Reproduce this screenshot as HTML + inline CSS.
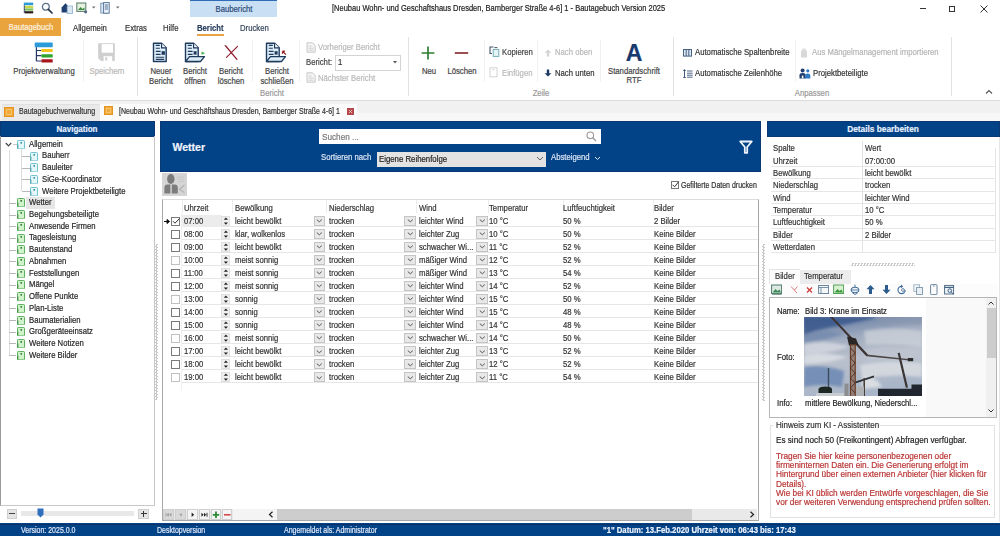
<!DOCTYPE html><html><head><meta charset="utf-8"><style>
html,body{margin:0;padding:0;}
body{width:1000px;height:536px;overflow:hidden;position:relative;background:#fff;font-family:"Liberation Sans",sans-serif;}
.t{position:absolute;white-space:nowrap;-webkit-text-stroke:0.2px currentColor;}
.r{position:absolute;}
</style></head><body>
<div class="r" style="left:190px;top:0px;width:87px;height:17px;background:#c9dff4;"></div>
<div class="r" style="left:190px;top:0px;width:87px;height:1px;background:#2f6cb5;"></div>
<div class="t" style="top:3.50px;font-size:9.00px;line-height:11px;color:#2c4a78;left:233.5px;transform-origin:50% 50%;transform:translateX(-50%) scaleX(0.858);">Baubericht</div>
<div class="t" style="top:2.50px;font-size:8.74px;line-height:11px;color:#222;left:331.8px;transform-origin:0 50%;transform:scaleX(0.858);">[Neubau Wohn- und Geschaftshaus Dresden, Bamberger Straße 4-6] 1 - Bautagebuch Version 2025</div>
<div class="r" style="left:920px;top:8px;width:6px;height:1.2px;background:#333;"></div>
<div class="r" style="left:949px;top:6px;width:6px;height:6px;background:none;box-sizing:border-box;border:1.2px solid #333;"></div>
<svg class="r" style="left:980px;top:5px" width="8" height="8" viewBox="0 0 8 8"><path d="M0.5 0.5L7.5 7.5M7.5 0.5L0.5 7.5" stroke="#333" stroke-width="1"/></svg>
<svg class="r" style="left:23px;top:2px" width="11" height="12" viewBox="0 0 11 12"><rect x="0.8" y="0.6" width="9.4" height="2.6" fill="#2b9ad8"/><rect x="1.6" y="3.8" width="8.6" height="2.2" fill="#c9d84a"/><rect x="1.6" y="6.4" width="8.6" height="2.2" fill="#7cc05a"/><rect x="1.6" y="9.2" width="8.6" height="2.2" fill="#2a1a1a"/><path d="M1.3 3.2V11" stroke="#283a66" stroke-width="0.9"/></svg>
<svg class="r" style="left:41px;top:2px" width="12" height="12" viewBox="0 0 12 12"><circle cx="4.8" cy="4.8" r="3.4" fill="none" stroke="#5a7188" stroke-width="1.3"/><path d="M7.3 7.3L11 11" stroke="#1f2f45" stroke-width="1.7" stroke-linecap="round"/></svg>
<svg class="r" style="left:61px;top:2px" width="12" height="12" viewBox="0 0 12 12"><path d="M0.6 5.4L4.5 1.2L8.4 5.4V10.6H0.6Z" fill="#1e3f6e"/><rect x="6.2" y="4" width="5.2" height="7.6" fill="#dbe9f5" stroke="#8fb0cc" stroke-width="0.8"/></svg>
<svg class="r" style="left:76px;top:2px" width="12" height="12" viewBox="0 0 12 12"><rect x="0.8" y="1" width="9" height="8.4" fill="#e7f1e0" stroke="#557a6a" stroke-width="1"/><path d="M2 8L4.5 5L6.5 7L8.5 5.5V8Z" fill="#3d8a3d"/><circle cx="9.6" cy="9.8" r="1.6" fill="#556a88"/></svg>
<svg class="r" style="left:92px;top:6px" width="4" height="3" viewBox="0 0 4 3"><path d="M0 0.5H3.5L1.75 2.5Z" fill="#666"/></svg>
<svg class="r" style="left:100px;top:2px" width="12" height="12" viewBox="0 0 12 12"><rect x="0.8" y="1.2" width="7" height="9.8" fill="#dceaf6" stroke="#6d8fb0" stroke-width="0.9"/><rect x="3.6" y="0.6" width="5.6" height="10.6" fill="#e8f2fa" stroke="#4f6f92" stroke-width="0.9"/><path d="M4.8 3H8M4.8 5H8M4.8 7H8" stroke="#2d4f78" stroke-width="0.8"/></svg>
<svg class="r" style="left:116px;top:6px" width="4" height="3" viewBox="0 0 4 3"><path d="M0 0.5H3.5L1.75 2.5Z" fill="#666"/></svg>
<div class="r" style="left:0px;top:18px;width:61px;height:18px;background:#e9a43e;"></div>
<div class="t" style="top:22.30px;font-size:8.78px;line-height:11px;color:#fdf3e0;left:30.5px;transform-origin:50% 50%;transform:translateX(-50%) scaleX(0.858);">Bautagebuch</div>
<div class="t" style="top:22.70px;font-size:9.00px;line-height:11px;color:#333;left:72.5px;transform-origin:0 50%;transform:scaleX(0.858);">Allgemein</div>
<div class="t" style="top:22.70px;font-size:9.00px;line-height:11px;color:#333;left:125px;transform-origin:0 50%;transform:scaleX(0.858);">Extras</div>
<div class="t" style="top:22.70px;font-size:9.00px;line-height:11px;color:#333;left:162.5px;transform-origin:0 50%;transform:scaleX(0.858);">Hilfe</div>
<div class="t" style="top:22.70px;font-size:9.00px;line-height:11px;color:#2a3f5f;font-weight:bold;left:197px;transform-origin:0 50%;transform:scaleX(0.858);">Bericht</div>
<div class="r" style="left:197px;top:34px;width:26.5px;height:2.2px;background:#e9a447;"></div>
<div class="t" style="top:22.70px;font-size:9.00px;line-height:11px;color:#34455c;left:240px;transform-origin:0 50%;transform:scaleX(0.858);">Drucken</div>
<div class="r" style="left:136.5px;top:37px;width:1px;height:59px;background:#e2e2e2;"></div>
<div class="r" style="left:408px;top:37px;width:1px;height:59px;background:#e2e2e2;"></div>
<div class="r" style="left:673px;top:37px;width:1px;height:59px;background:#e2e2e2;"></div>
<div class="r" style="left:951px;top:37px;width:1px;height:59px;background:#e2e2e2;"></div>
<div class="r" style="left:82.5px;top:40px;width:1px;height:42px;background:#f0f0f0;"></div>
<div class="r" style="left:251.5px;top:40px;width:1px;height:42px;background:#f0f0f0;"></div>
<div class="r" style="left:298.5px;top:40px;width:1px;height:42px;background:#f0f0f0;"></div>
<div class="r" style="left:483.5px;top:40px;width:1px;height:42px;background:#f0f0f0;"></div>
<div class="r" style="left:536.5px;top:40px;width:1px;height:42px;background:#f0f0f0;"></div>
<div class="r" style="left:600px;top:40px;width:1px;height:42px;background:#f0f0f0;"></div>
<div class="r" style="left:794.5px;top:40px;width:1px;height:42px;background:#f0f0f0;"></div>
<div class="t" style="top:88.00px;font-size:9.00px;line-height:11px;color:#999;left:272px;transform-origin:50% 50%;transform:translateX(-50%) scaleX(0.858);">Bericht</div>
<div class="t" style="top:88.00px;font-size:9.00px;line-height:11px;color:#999;left:540.5px;transform-origin:50% 50%;transform:translateX(-50%) scaleX(0.858);">Zeile</div>
<div class="t" style="top:88.00px;font-size:9.00px;line-height:11px;color:#999;left:812px;transform-origin:50% 50%;transform:translateX(-50%) scaleX(0.858);">Anpassen</div>
<svg class="r" style="left:985px;top:89px" width="8" height="6" viewBox="0 0 8 6"><path d="M1 4.5L4 1.5L7 4.5" fill="none" stroke="#555" stroke-width="1.1"/></svg>
<svg class="r" style="left:34px;top:42px" width="20" height="22" viewBox="0 0 20 22"><rect x="0.7" y="0.5" width="18" height="4.8" rx="0.6" fill="#2b9ad8"/><path d="M2.4 5.3V19.2M2.4 8.5H7.4M2.4 13.7H7.4M2.4 19H7.4" stroke="#283a66" stroke-width="1.2" fill="none"/><rect x="7.4" y="6.9" width="11.3" height="3.2" rx="0.5" fill="#f2c31a"/><rect x="7.4" y="12.2" width="11.3" height="3.2" rx="0.5" fill="#2fa52f"/><rect x="7.4" y="17.2" width="11.3" height="3.4" rx="0.5" fill="#a8141a"/></svg>
<div class="t" style="top:65.70px;font-size:9.00px;line-height:11px;color:#444;left:43.5px;transform-origin:50% 50%;transform:translateX(-50%) scaleX(0.858);">Projektverwaltung</div>
<svg class="r" style="left:97px;top:42px" width="20" height="20" viewBox="0 0 20 20"><path d="M1.2 1.2H17.8V19H4L1.2 16.2Z" fill="#cfcfcf"/><rect x="4.6" y="2.1" width="11.4" height="8.6" fill="#fff"/><rect x="6.6" y="14.2" width="8.6" height="4.8" fill="#fff"/><rect x="8.2" y="15.2" width="2" height="3.4" fill="#cfcfcf"/></svg>
<div class="t" style="top:65.70px;font-size:9.00px;line-height:11px;color:#b8b8b8;left:107px;transform-origin:50% 50%;transform:translateX(-50%) scaleX(0.858);">Speichern</div>
<svg class="r" style="left:152px;top:42px" width="16" height="21" viewBox="0 0 16 21"><path d="M1.5 1.2H9.6L14.2 5.8V19.5H1.5Z" fill="#ddeefa" stroke="#1f3b5c" stroke-width="1.4" stroke-linejoin="round"/><path d="M9.6 1.2V5.8H14.2" fill="#fff" stroke="#1f3b5c" stroke-width="1.2"/><path d="M3.8 3.4H7.8M3.8 6.2H7.8M3.8 9.4H8.6M3.8 12.4H8.6M3.8 15.2H12.2M3.8 17.4H12.2" stroke="#1f3b5c" stroke-width="1.1"/><rect x="9.6" y="9.2" width="3.3" height="3.6" fill="#1f3b5c"/></svg>
<div class="t" style="top:65.50px;font-size:9.00px;line-height:11px;color:#444;left:160.5px;transform-origin:50% 50%;transform:translateX(-50%) scaleX(0.858);">Neuer</div>
<div class="t" style="top:75.50px;font-size:9.00px;line-height:11px;color:#444;left:160.5px;transform-origin:50% 50%;transform:translateX(-50%) scaleX(0.858);">Bericht</div>
<svg class="r" style="left:184px;top:42px" width="23" height="21" viewBox="0 0 23 21"><path d="M1.5 1.2H9.6L14.2 5.8V19.5H1.5Z" fill="#ddeefa" stroke="#1f3b5c" stroke-width="1.4" stroke-linejoin="round"/><path d="M9.6 1.2V5.8H14.2" fill="#fff" stroke="#1f3b5c" stroke-width="1.2"/><path d="M3.8 3.4H7.8M3.8 6.2H7.8M3.8 9.4H8.6M3.8 12.4H8.6" stroke="#1f3b5c" stroke-width="1.1"/><rect x="9.6" y="9.2" width="3" height="3.4" fill="#1f3b5c"/><path d="M1.5 19.5L5.5 14.6H20.5L16.5 19.5Z" fill="#ddeefa" stroke="#1f3b5c" stroke-width="1.3" stroke-linejoin="round"/><path d="M17.6 9.6L21 11.2L17.6 12.8Z" fill="#3fae3f"/></svg>
<div class="t" style="top:65.50px;font-size:9.00px;line-height:11px;color:#444;left:195px;transform-origin:50% 50%;transform:translateX(-50%) scaleX(0.858);">Bericht</div>
<div class="t" style="top:75.50px;font-size:9.00px;line-height:11px;color:#444;left:195px;transform-origin:50% 50%;transform:translateX(-50%) scaleX(0.858);">öffnen</div>
<svg class="r" style="left:223px;top:44px" width="16" height="17" viewBox="0 0 16 17"><path d="M1.2 1.2L3 1.2L14.8 15.4L13.6 16Z M14.6 1.6L15 2.8L3.6 14L2.6 13.4Z" fill="#8e1c2c"/></svg>
<div class="t" style="top:65.50px;font-size:9.00px;line-height:11px;color:#444;left:231px;transform-origin:50% 50%;transform:translateX(-50%) scaleX(0.858);">Bericht</div>
<div class="t" style="top:75.50px;font-size:9.00px;line-height:11px;color:#444;left:231px;transform-origin:50% 50%;transform:translateX(-50%) scaleX(0.858);">löschen</div>
<svg class="r" style="left:265px;top:42px" width="23" height="21" viewBox="0 0 23 21"><path d="M1.5 1.2H9.6L14.2 5.8V19.5H1.5Z" fill="#ddeefa" stroke="#1f3b5c" stroke-width="1.4" stroke-linejoin="round"/><path d="M9.6 1.2V5.8H14.2" fill="#fff" stroke="#1f3b5c" stroke-width="1.2"/><path d="M3.8 3.4H7.8M3.8 6.2H7.8M3.8 9.4H8.6M3.8 12.4H8.6" stroke="#1f3b5c" stroke-width="1.1"/><rect x="9.6" y="9.2" width="3" height="3.4" fill="#1f3b5c"/><path d="M1.5 19.5L5.5 14.6H20.5L16.5 19.5Z" fill="#ddeefa" stroke="#1f3b5c" stroke-width="1.3" stroke-linejoin="round"/><path d="M17.5 9.2L21 12.6M17.5 9.2V11.8M17.5 9.2H20" stroke="#9a2222" stroke-width="1.2" fill="none"/></svg>
<div class="t" style="top:65.50px;font-size:9.00px;line-height:11px;color:#444;left:276.5px;transform-origin:50% 50%;transform:translateX(-50%) scaleX(0.858);">Bericht</div>
<div class="t" style="top:75.50px;font-size:9.00px;line-height:11px;color:#444;left:276.5px;transform-origin:50% 50%;transform:translateX(-50%) scaleX(0.858);">schließen</div>
<svg class="r" style="left:306px;top:41.8px" width="11" height="11" viewBox="0 0 11 11"><path d="M1 0.8H6.5L9.2 3.5V10.2H1Z" fill="#f4f4f4" stroke="#c4c4c4" stroke-width="0.9"/><path d="M2.6 4.2H5.6M2.6 6.2H7.6M2.6 8.2H7.6" stroke="#cacaca" stroke-width="0.8"/></svg>
<div class="t" style="top:41.80px;font-size:9.00px;line-height:11px;color:#b8b8b8;left:318px;transform-origin:0 50%;transform:scaleX(0.858);">Vorheriger Bericht</div>
<div class="t" style="top:56.50px;font-size:9.00px;line-height:11px;color:#444;left:306px;transform-origin:0 50%;transform:scaleX(0.858);">Bericht:</div>
<div class="r" style="left:335px;top:54.5px;width:66px;height:16px;background:#fff;box-sizing:border-box;border:1px solid #d4d4d4;"></div>
<div class="t" style="top:56.50px;font-size:9.00px;line-height:11px;color:#333;left:338px;transform-origin:0 50%;transform:scaleX(0.858);">1</div>
<svg class="r" style="left:393px;top:61px" width="5" height="3" viewBox="0 0 5 3"><path d="M0 0H4L2 2.5Z" fill="#555"/></svg>
<svg class="r" style="left:306px;top:72px" width="11" height="11" viewBox="0 0 11 11"><path d="M1 0.8H6.5L9.2 3.5V10.2H1Z" fill="#f4f4f4" stroke="#c4c4c4" stroke-width="0.9"/><path d="M2.6 4.2H5.6M2.6 6.2H7.6M2.6 8.2H7.6" stroke="#cacaca" stroke-width="0.8"/></svg>
<div class="t" style="top:72.50px;font-size:9.00px;line-height:11px;color:#b8b8b8;left:318px;transform-origin:0 50%;transform:scaleX(0.858);">Nächster Bericht</div>
<svg class="r" style="left:421px;top:46px" width="14" height="14" viewBox="0 0 14 14"><path d="M7 0.6V13.4M0.6 7H13.4" stroke="#2f7d34" stroke-width="1.7"/></svg>
<div class="t" style="top:66.10px;font-size:9.00px;line-height:11px;color:#444;left:428.5px;transform-origin:50% 50%;transform:translateX(-50%) scaleX(0.858);">Neu</div>
<svg class="r" style="left:454px;top:51px" width="15" height="4" viewBox="0 0 15 4"><path d="M0.8 2H14.2" stroke="#8f3b3d" stroke-width="1.8"/></svg>
<div class="t" style="top:66.10px;font-size:9.00px;line-height:11px;color:#444;left:461.5px;transform-origin:50% 50%;transform:translateX(-50%) scaleX(0.858);">Löschen</div>
<svg class="r" style="left:489px;top:46px" width="11" height="11" viewBox="0 0 11 11"><path d="M4.5 1H1V7.5H3" fill="none" stroke="#44556a" stroke-width="1.1"/><rect x="4.2" y="3.4" width="5.6" height="7" fill="#e6f3f4" stroke="#6aa9b0" stroke-width="0.9"/><path d="M5.4 1.6H8.4" stroke="#44556a" stroke-width="1"/></svg>
<div class="t" style="top:46.50px;font-size:9.00px;line-height:11px;color:#444;left:501.5px;transform-origin:0 50%;transform:scaleX(0.858);">Kopieren</div>
<svg class="r" style="left:489px;top:67px" width="10" height="11" viewBox="0 0 10 11"><rect x="1" y="0.8" width="7" height="9" fill="none" stroke="#cfcfcf" stroke-width="0.9"/><path d="M3.5 2.6H5.5" stroke="#cfcfcf"/></svg>
<div class="t" style="top:67.50px;font-size:9.00px;line-height:11px;color:#b8b8b8;left:501.5px;transform-origin:0 50%;transform:scaleX(0.858);">Einfügen</div>
<svg class="r" style="left:544px;top:48.5px" width="8" height="8" viewBox="0 0 8 8"><path d="M4 0.5L7.4 3.8H5.2V7.6H2.8V3.8H0.6Z" fill="#d4d4d4"/></svg>
<div class="t" style="top:46.50px;font-size:9.00px;line-height:11px;color:#b8b8b8;left:555px;transform-origin:0 50%;transform:scaleX(0.858);">Nach oben</div>
<svg class="r" style="left:544px;top:69px" width="8" height="8" viewBox="0 0 8 8"><path d="M4 7.6L7.4 4.2H5.2V0.4H2.8V4.2H0.6Z" fill="#1f3b63"/></svg>
<div class="t" style="top:67.50px;font-size:9.00px;line-height:11px;color:#333;left:555px;transform-origin:0 50%;transform:scaleX(0.858);">Nach unten</div>
<div class="t" style="top:41.00px;font-size:23.00px;line-height:24px;color:#173a6e;font-weight:bold;left:634px;transform-origin:50% 50%;transform:translateX(-50%);">A</div>
<div class="t" style="top:66.10px;font-size:9.00px;line-height:11px;color:#444;left:634px;transform-origin:50% 50%;transform:translateX(-50%) scaleX(0.858);">Standardschrift</div>
<div class="t" style="top:75.10px;font-size:9.00px;line-height:11px;color:#444;left:634px;transform-origin:50% 50%;transform:translateX(-50%) scaleX(0.858);">RTF</div>
<svg class="r" style="left:683px;top:48.5px" width="9" height="8" viewBox="0 0 9 8"><rect x="0.5" y="0.5" width="8" height="6.6" fill="#dbe8f5" stroke="#4a6282" stroke-width="1"/><path d="M3.2 0.5V7.1M5.8 0.5V7.1" stroke="#4a6282" stroke-width="1"/></svg>
<div class="t" style="top:47.10px;font-size:9.00px;line-height:11px;color:#333;left:694.5px;transform-origin:0 50%;transform:scaleX(0.858);">Automatische Spaltenbreite</div>
<svg class="r" style="left:683px;top:68.5px" width="10" height="9" viewBox="0 0 10 9"><path d="M1.5 0.8V9.2M0.3 2L1.5 0.6L2.7 2M0.3 8L1.5 9.4L2.7 8" stroke="#2c4a70" stroke-width="0.9" fill="none"/><path d="M4 2H9.6M4 4.2H9.6M4 6.2H9.6M4 8.2H9.6" stroke="#3b5578" stroke-width="0.9"/></svg>
<div class="t" style="top:67.50px;font-size:9.00px;line-height:11px;color:#333;left:694.5px;transform-origin:0 50%;transform:scaleX(0.858);">Automatische Zeilenhöhe</div>
<svg class="r" style="left:800px;top:47.5px" width="9" height="10" viewBox="0 0 9 10"><rect x="1" y="2.5" width="6" height="7" fill="#d8d8d8"/><rect x="2.3" y="0.6" width="3.4" height="2" fill="#d8d8d8"/></svg>
<div class="t" style="top:47.10px;font-size:9.00px;line-height:11px;color:#b5b5b5;left:812px;transform-origin:0 50%;transform:scaleX(0.858);">Aus Mängelmanagement importieren</div>
<svg class="r" style="left:799px;top:67.5px" width="12" height="11" viewBox="0 0 12 11"><circle cx="3.6" cy="2.4" r="2" fill="#1e3f6e"/><path d="M0.5 10.5V7.2Q0.5 5 3.6 5Q6.7 5 6.7 7.2V10.5Z" fill="#1e3f6e"/><circle cx="8.8" cy="2.8" r="1.6" fill="#2c7bc4"/><path d="M6.3 10.5V7.5Q6.3 5.6 8.8 5.6Q11.3 5.6 11.3 7.5V10.5Z" fill="#2c7bc4"/><path d="M2.8 10.5V7.6H4.4V10.5" fill="#fff"/></svg>
<div class="t" style="top:67.50px;font-size:9.00px;line-height:11px;color:#333;left:812.5px;transform-origin:0 50%;transform:scaleX(0.858);">Projektbeteiligte</div>
<div class="r" style="left:0px;top:100px;width:1000px;height:1px;background:#dcdcdc;"></div>
<div class="r" style="left:0px;top:101px;width:1000px;height:20px;background:#f1f1f1;"></div>
<div class="r" style="left:2px;top:104px;width:98px;height:17px;background:#e9e9e9;border-top:1px solid #e0e0e0;box-sizing:border-box;"></div>
<div class="r" style="left:357px;top:112.5px;width:643px;height:8.5px;background:#f8f7f8;"></div>
<div class="r" style="left:100px;top:103.5px;width:257px;height:17.5px;background:#fbfbfb;"></div>
<svg class="r" style="left:4px;top:107px" width="10" height="10" viewBox="0 0 10 10"><rect x="0.5" y="0.5" width="9" height="9" fill="#f2a93b" stroke="#e59520" stroke-width="1"/><rect x="2.6" y="2.6" width="4.8" height="4.8" fill="none" stroke="#f7c87a" stroke-width="0.8"/></svg>
<div class="t" style="top:107.40px;font-size:8.27px;line-height:10px;color:#333;left:18.5px;transform-origin:0 50%;transform:scaleX(0.858);">Bautagebuchverwaltung</div>
<svg class="r" style="left:104px;top:106px" width="9" height="9" viewBox="0 0 9 9"><rect x="0.5" y="0.5" width="8" height="8" fill="#f2a93b" stroke="#e59520" stroke-width="1"/><rect x="2.4" y="2.4" width="4.2" height="4.2" fill="none" stroke="#f7c87a" stroke-width="0.8"/></svg>
<div class="t" style="top:106.50px;font-size:8.16px;line-height:10px;color:#333;left:118.5px;transform-origin:0 50%;transform:scaleX(0.858);">[Neubau Wohn- und Geschäftshaus Dresden, Bamberger Straße 4-6] 1</div>
<div class="r" style="left:347px;top:107.5px;width:7px;height:7px;background:#b5494b;"></div>
<svg class="r" style="left:347px;top:107.5px" width="7" height="7" viewBox="0 0 7 7"><path d="M2 2L5 5M5 2L2 5" stroke="#f4d0d0" stroke-width="0.8"/></svg>
<div class="r" style="left:0px;top:121px;width:154.5px;height:15.8px;background:#024286;box-sizing:border-box;border:1px solid #0b3872;"></div>
<div class="t" style="top:122.80px;font-size:9.34px;line-height:12px;color:#e8f0ff;font-weight:bold;left:77px;transform-origin:50% 50%;transform:translateX(-50%) scaleX(0.858);">Navigation</div>
<div class="r" style="left:0px;top:136px;width:155px;height:370px;background:none;box-sizing:border-box;border:1px solid #c8c8c8;border-top:none;border-left:1px solid #9a9a9a;"></div>
<div class="r" style="left:9px;top:150px;width:1px;height:205px;background:#dcdcdc;"></div>
<div class="r" style="left:21px;top:148.5px;width:1px;height:42px;background:#dcdcdc;"></div>
<svg class="r" style="left:17px;top:139.79999999999998px" width="8" height="9" viewBox="0 0 8 9"><rect x="0.5" y="0.5" width="7" height="8.4" rx="0.8" fill="#e4f8fb" stroke="#62bccb" stroke-width="0.9"/><path d="M0.9 4.5V8.6" stroke="#3a8a98" stroke-width="0.8"/><circle cx="4.2" cy="2.8" r="0.9" fill="#2b7d90"/></svg>
<div class="t" style="top:138.70px;font-size:9.00px;line-height:11px;color:#262626;left:29px;transform-origin:0 50%;transform:scaleX(0.858);">Allgemein</div>
<div class="r" style="left:21.5px;top:155.92px;width:8px;height:1px;background:#b8b8b8;"></div>
<svg class="r" style="left:29.5px;top:151.51999999999998px" width="8" height="9" viewBox="0 0 8 9"><rect x="0.5" y="0.5" width="7" height="8.4" rx="0.8" fill="#e4f8fb" stroke="#62bccb" stroke-width="0.9"/><path d="M0.9 4.5V8.6" stroke="#3a8a98" stroke-width="0.8"/><circle cx="4.2" cy="2.8" r="0.9" fill="#2b7d90"/></svg>
<div class="t" style="top:150.42px;font-size:9.00px;line-height:11px;color:#262626;left:41.5px;transform-origin:0 50%;transform:scaleX(0.858);">Bauherr</div>
<div class="r" style="left:21.5px;top:167.64px;width:8px;height:1px;background:#b8b8b8;"></div>
<svg class="r" style="left:29.5px;top:163.23999999999998px" width="8" height="9" viewBox="0 0 8 9"><rect x="0.5" y="0.5" width="7" height="8.4" rx="0.8" fill="#e4f8fb" stroke="#62bccb" stroke-width="0.9"/><path d="M0.9 4.5V8.6" stroke="#3a8a98" stroke-width="0.8"/><circle cx="4.2" cy="2.8" r="0.9" fill="#2b7d90"/></svg>
<div class="t" style="top:162.14px;font-size:9.00px;line-height:11px;color:#262626;left:41.5px;transform-origin:0 50%;transform:scaleX(0.858);">Bauleiter</div>
<div class="r" style="left:21.5px;top:179.35999999999999px;width:8px;height:1px;background:#b8b8b8;"></div>
<svg class="r" style="left:29.5px;top:174.95999999999998px" width="8" height="9" viewBox="0 0 8 9"><rect x="0.5" y="0.5" width="7" height="8.4" rx="0.8" fill="#e4f8fb" stroke="#62bccb" stroke-width="0.9"/><path d="M0.9 4.5V8.6" stroke="#3a8a98" stroke-width="0.8"/><circle cx="4.2" cy="2.8" r="0.9" fill="#2b7d90"/></svg>
<div class="t" style="top:173.86px;font-size:9.00px;line-height:11px;color:#262626;left:41.5px;transform-origin:0 50%;transform:scaleX(0.858);">SiGe-Koordinator</div>
<div class="r" style="left:21.5px;top:191.07999999999998px;width:8px;height:1px;background:#b8b8b8;"></div>
<svg class="r" style="left:29.5px;top:186.67999999999998px" width="8" height="9" viewBox="0 0 8 9"><rect x="0.5" y="0.5" width="7" height="8.4" rx="0.8" fill="#e4f8fb" stroke="#62bccb" stroke-width="0.9"/><path d="M0.9 4.5V8.6" stroke="#3a8a98" stroke-width="0.8"/><circle cx="4.2" cy="2.8" r="0.9" fill="#2b7d90"/></svg>
<div class="t" style="top:185.58px;font-size:9.00px;line-height:11px;color:#262626;left:41.5px;transform-origin:0 50%;transform:scaleX(0.858);">Weitere Projektbeteiligte</div>
<div class="r" style="left:26px;top:196.79999999999998px;width:29px;height:12px;background:#e6e6e6;"></div>
<div class="r" style="left:9px;top:202.79999999999998px;width:7px;height:1px;background:#b8b8b8;"></div>
<svg class="r" style="left:17px;top:198.39999999999998px" width="8" height="9" viewBox="0 0 8 9"><rect x="0.5" y="0.5" width="7" height="8.4" rx="0.8" fill="#d2f2cc" stroke="#4fa852" stroke-width="0.9"/><path d="M0.9 4.5V8.6" stroke="#2a7a30" stroke-width="0.8"/><circle cx="4.2" cy="2.8" r="0.9" fill="#1e6b28"/></svg>
<div class="t" style="top:197.30px;font-size:9.00px;line-height:11px;color:#262626;left:29px;transform-origin:0 50%;transform:scaleX(0.858);">Wetter</div>
<div class="r" style="left:9px;top:214.51999999999998px;width:7px;height:1px;background:#b8b8b8;"></div>
<svg class="r" style="left:17px;top:210.11999999999998px" width="8" height="9" viewBox="0 0 8 9"><rect x="0.5" y="0.5" width="7" height="8.4" rx="0.8" fill="#d2f2cc" stroke="#4fa852" stroke-width="0.9"/><path d="M0.9 4.5V8.6" stroke="#2a7a30" stroke-width="0.8"/><circle cx="4.2" cy="2.8" r="0.9" fill="#1e6b28"/></svg>
<div class="t" style="top:209.02px;font-size:9.00px;line-height:11px;color:#262626;left:29px;transform-origin:0 50%;transform:scaleX(0.858);">Begehungsbeteiligte</div>
<div class="r" style="left:9px;top:226.24px;width:7px;height:1px;background:#b8b8b8;"></div>
<svg class="r" style="left:17px;top:221.84px" width="8" height="9" viewBox="0 0 8 9"><rect x="0.5" y="0.5" width="7" height="8.4" rx="0.8" fill="#d2f2cc" stroke="#4fa852" stroke-width="0.9"/><path d="M0.9 4.5V8.6" stroke="#2a7a30" stroke-width="0.8"/><circle cx="4.2" cy="2.8" r="0.9" fill="#1e6b28"/></svg>
<div class="t" style="top:220.74px;font-size:9.00px;line-height:11px;color:#262626;left:29px;transform-origin:0 50%;transform:scaleX(0.858);">Anwesende Firmen</div>
<div class="r" style="left:9px;top:237.95999999999998px;width:7px;height:1px;background:#b8b8b8;"></div>
<svg class="r" style="left:17px;top:233.55999999999997px" width="8" height="9" viewBox="0 0 8 9"><rect x="0.5" y="0.5" width="7" height="8.4" rx="0.8" fill="#d2f2cc" stroke="#4fa852" stroke-width="0.9"/><path d="M0.9 4.5V8.6" stroke="#2a7a30" stroke-width="0.8"/><circle cx="4.2" cy="2.8" r="0.9" fill="#1e6b28"/></svg>
<div class="t" style="top:232.46px;font-size:9.00px;line-height:11px;color:#262626;left:29px;transform-origin:0 50%;transform:scaleX(0.858);">Tagesleistung</div>
<div class="r" style="left:9px;top:249.68px;width:7px;height:1px;background:#b8b8b8;"></div>
<svg class="r" style="left:17px;top:245.28px" width="8" height="9" viewBox="0 0 8 9"><rect x="0.5" y="0.5" width="7" height="8.4" rx="0.8" fill="#d2f2cc" stroke="#4fa852" stroke-width="0.9"/><path d="M0.9 4.5V8.6" stroke="#2a7a30" stroke-width="0.8"/><circle cx="4.2" cy="2.8" r="0.9" fill="#1e6b28"/></svg>
<div class="t" style="top:244.18px;font-size:9.00px;line-height:11px;color:#262626;left:29px;transform-origin:0 50%;transform:scaleX(0.858);">Bautenstand</div>
<div class="r" style="left:9px;top:261.4px;width:7px;height:1px;background:#b8b8b8;"></div>
<svg class="r" style="left:17px;top:257.0px" width="8" height="9" viewBox="0 0 8 9"><rect x="0.5" y="0.5" width="7" height="8.4" rx="0.8" fill="#d2f2cc" stroke="#4fa852" stroke-width="0.9"/><path d="M0.9 4.5V8.6" stroke="#2a7a30" stroke-width="0.8"/><circle cx="4.2" cy="2.8" r="0.9" fill="#1e6b28"/></svg>
<div class="t" style="top:255.90px;font-size:9.00px;line-height:11px;color:#262626;left:29px;transform-origin:0 50%;transform:scaleX(0.858);">Abnahmen</div>
<div class="r" style="left:9px;top:273.12px;width:7px;height:1px;background:#b8b8b8;"></div>
<svg class="r" style="left:17px;top:268.72px" width="8" height="9" viewBox="0 0 8 9"><rect x="0.5" y="0.5" width="7" height="8.4" rx="0.8" fill="#d2f2cc" stroke="#4fa852" stroke-width="0.9"/><path d="M0.9 4.5V8.6" stroke="#2a7a30" stroke-width="0.8"/><circle cx="4.2" cy="2.8" r="0.9" fill="#1e6b28"/></svg>
<div class="t" style="top:267.62px;font-size:9.00px;line-height:11px;color:#262626;left:29px;transform-origin:0 50%;transform:scaleX(0.858);">Feststellungen</div>
<div class="r" style="left:9px;top:284.84000000000003px;width:7px;height:1px;background:#b8b8b8;"></div>
<svg class="r" style="left:17px;top:280.44000000000005px" width="8" height="9" viewBox="0 0 8 9"><rect x="0.5" y="0.5" width="7" height="8.4" rx="0.8" fill="#d2f2cc" stroke="#4fa852" stroke-width="0.9"/><path d="M0.9 4.5V8.6" stroke="#2a7a30" stroke-width="0.8"/><circle cx="4.2" cy="2.8" r="0.9" fill="#1e6b28"/></svg>
<div class="t" style="top:279.34px;font-size:9.00px;line-height:11px;color:#262626;left:29px;transform-origin:0 50%;transform:scaleX(0.858);">Mängel</div>
<div class="r" style="left:9px;top:296.56px;width:7px;height:1px;background:#b8b8b8;"></div>
<svg class="r" style="left:17px;top:292.16px" width="8" height="9" viewBox="0 0 8 9"><rect x="0.5" y="0.5" width="7" height="8.4" rx="0.8" fill="#d2f2cc" stroke="#4fa852" stroke-width="0.9"/><path d="M0.9 4.5V8.6" stroke="#2a7a30" stroke-width="0.8"/><circle cx="4.2" cy="2.8" r="0.9" fill="#1e6b28"/></svg>
<div class="t" style="top:291.06px;font-size:9.00px;line-height:11px;color:#262626;left:29px;transform-origin:0 50%;transform:scaleX(0.858);">Offene Punkte</div>
<div class="r" style="left:9px;top:308.28px;width:7px;height:1px;background:#b8b8b8;"></div>
<svg class="r" style="left:17px;top:303.88px" width="8" height="9" viewBox="0 0 8 9"><rect x="0.5" y="0.5" width="7" height="8.4" rx="0.8" fill="#d2f2cc" stroke="#4fa852" stroke-width="0.9"/><path d="M0.9 4.5V8.6" stroke="#2a7a30" stroke-width="0.8"/><circle cx="4.2" cy="2.8" r="0.9" fill="#1e6b28"/></svg>
<div class="t" style="top:302.78px;font-size:9.00px;line-height:11px;color:#262626;left:29px;transform-origin:0 50%;transform:scaleX(0.858);">Plan-Liste</div>
<div class="r" style="left:9px;top:320.0px;width:7px;height:1px;background:#b8b8b8;"></div>
<svg class="r" style="left:17px;top:315.6px" width="8" height="9" viewBox="0 0 8 9"><rect x="0.5" y="0.5" width="7" height="8.4" rx="0.8" fill="#d2f2cc" stroke="#4fa852" stroke-width="0.9"/><path d="M0.9 4.5V8.6" stroke="#2a7a30" stroke-width="0.8"/><circle cx="4.2" cy="2.8" r="0.9" fill="#1e6b28"/></svg>
<div class="t" style="top:314.50px;font-size:9.00px;line-height:11px;color:#262626;left:29px;transform-origin:0 50%;transform:scaleX(0.858);">Baumaterialien</div>
<div class="r" style="left:9px;top:331.72px;width:7px;height:1px;background:#b8b8b8;"></div>
<svg class="r" style="left:17px;top:327.32000000000005px" width="8" height="9" viewBox="0 0 8 9"><rect x="0.5" y="0.5" width="7" height="8.4" rx="0.8" fill="#d2f2cc" stroke="#4fa852" stroke-width="0.9"/><path d="M0.9 4.5V8.6" stroke="#2a7a30" stroke-width="0.8"/><circle cx="4.2" cy="2.8" r="0.9" fill="#1e6b28"/></svg>
<div class="t" style="top:326.22px;font-size:9.00px;line-height:11px;color:#262626;left:29px;transform-origin:0 50%;transform:scaleX(0.858);">Großgeräteeinsatz</div>
<div class="r" style="left:9px;top:343.44px;width:7px;height:1px;background:#b8b8b8;"></div>
<svg class="r" style="left:17px;top:339.04px" width="8" height="9" viewBox="0 0 8 9"><rect x="0.5" y="0.5" width="7" height="8.4" rx="0.8" fill="#d2f2cc" stroke="#4fa852" stroke-width="0.9"/><path d="M0.9 4.5V8.6" stroke="#2a7a30" stroke-width="0.8"/><circle cx="4.2" cy="2.8" r="0.9" fill="#1e6b28"/></svg>
<div class="t" style="top:337.94px;font-size:9.00px;line-height:11px;color:#262626;left:29px;transform-origin:0 50%;transform:scaleX(0.858);">Weitere Notizen</div>
<div class="r" style="left:9px;top:355.15999999999997px;width:7px;height:1px;background:#b8b8b8;"></div>
<svg class="r" style="left:17px;top:350.76px" width="8" height="9" viewBox="0 0 8 9"><rect x="0.5" y="0.5" width="7" height="8.4" rx="0.8" fill="#d2f2cc" stroke="#4fa852" stroke-width="0.9"/><path d="M0.9 4.5V8.6" stroke="#2a7a30" stroke-width="0.8"/><circle cx="4.2" cy="2.8" r="0.9" fill="#1e6b28"/></svg>
<div class="t" style="top:349.66px;font-size:9.00px;line-height:11px;color:#262626;left:29px;transform-origin:0 50%;transform:scaleX(0.858);">Weitere Bilder</div>
<div class="r" style="left:12.5px;top:144.2px;width:4px;height:1px;background:#c8c8c8;"></div>
<svg class="r" style="left:5px;top:141.8px" width="7" height="5" viewBox="0 0 7 5"><path d="M0.8 1L3.5 3.8L6.2 1" fill="none" stroke="#444" stroke-width="1.2"/></svg>
<div class="r" style="left:6.5px;top:508.5px;width:10.5px;height:10px;background:#e4e4e4;box-sizing:border-box;border:1px solid #cfcfcf;"></div>
<div class="r" style="left:9px;top:513px;width:5.5px;height:1.2px;background:#444;"></div>
<div class="r" style="left:21px;top:511px;width:113px;height:4.5px;background:#e8e8e8;"></div>
<svg class="r" style="left:37px;top:508px" width="7" height="10" viewBox="0 0 7 10"><path d="M0.5 0.5H6.5V6.5L3.5 9.5L0.5 6.5Z" fill="#2f6fbd"/></svg>
<div class="r" style="left:138px;top:508.5px;width:11px;height:10px;background:#e4e4e4;box-sizing:border-box;border:1px solid #cfcfcf;"></div>
<div class="r" style="left:140.5px;top:513px;width:6px;height:1.2px;background:#333;"></div>
<div class="r" style="left:143px;top:510.5px;width:1.2px;height:6px;background:#333;"></div>
<div class="r" style="left:160px;top:121px;width:601px;height:51px;background:#024286;box-sizing:border-box;border:1px solid #0b3872;"></div>
<div class="t" style="top:140.50px;font-size:10.50px;line-height:13px;color:#f0f5ff;font-weight:bold;left:172.5px;transform-origin:0 50%;">Wetter</div>
<div class="r" style="left:319px;top:129px;width:282px;height:15px;background:#fff;"></div>
<div class="t" style="top:130.50px;font-size:9.56px;line-height:12px;color:#777;left:321.5px;transform-origin:0 50%;transform:scaleX(0.858);">Suchen ...</div>
<svg class="r" style="left:586px;top:131px" width="11" height="11" viewBox="0 0 11 11"><circle cx="4.3" cy="4.3" r="3.3" fill="none" stroke="#999" stroke-width="1.1"/><path d="M6.7 6.7L10 10" stroke="#999" stroke-width="1.3"/></svg>
<div class="t" style="top:152.00px;font-size:9.00px;line-height:11px;color:#dce6f5;left:321px;transform-origin:0 50%;transform:scaleX(0.858);">Sortieren nach</div>
<div class="r" style="left:377px;top:151.5px;width:169px;height:15px;background:#e3e3e3;"></div>
<div class="t" style="top:153.50px;font-size:9.11px;line-height:11px;color:#222;left:379px;transform-origin:0 50%;transform:scaleX(0.858);">Eigene Reihenfolge</div>
<svg class="r" style="left:536px;top:156px" width="8" height="5" viewBox="0 0 8 5"><path d="M1 1L4 4L7 1" fill="none" stroke="#666" stroke-width="1"/></svg>
<div class="t" style="top:152.00px;font-size:9.00px;line-height:11px;color:#dce6f5;left:551px;transform-origin:0 50%;transform:scaleX(0.858);">Absteigend</div>
<svg class="r" style="left:594px;top:155.5px" width="7" height="5" viewBox="0 0 7 5"><path d="M1 1L3.5 3.5L6 1" fill="none" stroke="#dce6f5" stroke-width="1"/></svg>
<svg class="r" style="left:739px;top:139.5px" width="14" height="14" viewBox="0 0 14 14"><path d="M1.2 1.5H12.8L8.2 7V12.8H5.8V7Z" fill="none" stroke="#eef3fb" stroke-width="1.8" stroke-linejoin="round"/></svg>
<div class="r" style="left:161.5px;top:173.3px;width:25.5px;height:23px;background:#d5d5d5;"></div>
<svg class="r" style="left:161.5px;top:173.3px" width="25.5" height="23" viewBox="0 0 25.5 23"><ellipse cx="8.8" cy="6" rx="3.7" ry="4.9" fill="#7a7a7a"/><path d="M2.4 20.4V14.6Q2.4 11.6 5.5 11.6H8.4V20.4Z" fill="#7c7c7c"/><path d="M9.8 20.4V11.6H12.6Q15.8 11.6 15.8 14.6V20.4Z" fill="#7c7c7c"/><path d="M15 4.2H22M15 6.4H22M16 8.6H22" stroke="#c4c4c4" stroke-width="0.8"/><path d="M22.5 12L17.5 16.2L22.5 19.8" fill="none" stroke="#b5b5b5" stroke-width="1.4"/></svg>
<div class="r" style="left:671px;top:181px;width:8px;height:8px;background:#fff;box-sizing:border-box;border:1px solid #777;"></div>
<svg class="r" style="left:671px;top:180px" width="9" height="9" viewBox="0 0 9 9"><path d="M1.6 4.8L3.6 6.8L7.6 1.8" fill="none" stroke="#333" stroke-width="1"/></svg>
<div class="t" style="top:180.60px;font-size:8.16px;line-height:10px;color:#333;left:681px;transform-origin:0 50%;transform:scaleX(0.858);">Gefilterte Daten drucken</div>
<div class="r" style="left:162px;top:198.5px;width:597px;height:322.5px;background:#fff;box-sizing:border-box;border:1px solid #a8a8a8;border-top-color:#dcdcdc;"></div>
<div class="r" style="left:181.5px;top:200px;width:1px;height:13px;background:#ececec;"></div>
<div class="r" style="left:231.5px;top:200px;width:1px;height:13px;background:#ececec;"></div>
<div class="r" style="left:326px;top:200px;width:1px;height:13px;background:#ececec;"></div>
<div class="r" style="left:415.5px;top:200px;width:1px;height:13px;background:#ececec;"></div>
<div class="r" style="left:487.5px;top:200px;width:1px;height:13px;background:#ececec;"></div>
<div class="r" style="left:562.5px;top:200px;width:1px;height:13px;background:#ececec;"></div>
<div class="r" style="left:652.5px;top:200px;width:1px;height:13px;background:#ececec;"></div>
<div class="t" style="top:202.80px;font-size:9.00px;line-height:11px;color:#333;left:184px;transform-origin:0 50%;transform:scaleX(0.858);">Uhrzeit</div>
<div class="t" style="top:202.80px;font-size:9.00px;line-height:11px;color:#333;left:235.3px;transform-origin:0 50%;transform:scaleX(0.858);">Bewölkung</div>
<div class="t" style="top:202.80px;font-size:9.00px;line-height:11px;color:#333;left:329px;transform-origin:0 50%;transform:scaleX(0.858);">Niederschlag</div>
<div class="t" style="top:202.80px;font-size:9.00px;line-height:11px;color:#333;left:418.5px;transform-origin:0 50%;transform:scaleX(0.858);">Wind</div>
<div class="t" style="top:202.80px;font-size:9.00px;line-height:11px;color:#333;left:489.3px;transform-origin:0 50%;transform:scaleX(0.858);">Temperatur</div>
<div class="t" style="top:202.80px;font-size:9.00px;line-height:11px;color:#333;left:563.3px;transform-origin:0 50%;transform:scaleX(0.858);">Luftfeuchtigkeit</div>
<div class="t" style="top:202.80px;font-size:9.00px;line-height:11px;color:#333;left:653.8px;transform-origin:0 50%;transform:scaleX(0.858);">Bilder</div>
<div class="r" style="left:181.5px;top:226px;width:576px;height:1px;background:#e6e6e6;"></div>
<div class="r" style="left:181.5px;top:214.5px;width:40px;height:12.5px;background:#ececec;"></div>
<div class="r" style="left:170.5px;top:216.5px;width:9px;height:9px;background:#fff;box-sizing:border-box;border:1px solid #7a7a7a;"></div>
<svg class="r" style="left:170.5px;top:215.5px" width="10" height="10" viewBox="0 0 10 10"><path d="M2 5.2L4 7.2L8.4 2.6" fill="none" stroke="#333" stroke-width="1"/></svg>
<svg class="r" style="left:163.5px;top:218.5px" width="7" height="5" viewBox="0 0 7 5"><path d="M0 2.5H4.5M3 0.5L5.5 2.5L3 4.5Z" stroke="#111" stroke-width="1" fill="#111"/></svg>
<div class="r" style="left:221.3px;top:216.0px;width:9px;height:9.5px;background:#efefef;box-sizing:border-box;border:1px solid #e0e0e0;"></div>
<svg class="r" style="left:221.3px;top:216.0px" width="9" height="10" viewBox="0 0 9 10"><path d="M2.8 3.8L4.9 1.6L7 3.8Z M2.8 6.6L4.9 8.8L7 6.6Z" fill="#222"/></svg>
<div class="r" style="left:313.5px;top:215.5px;width:11.5px;height:10.5px;background:#e8e8e8;box-sizing:border-box;border:1px solid #c4c4c4;"></div>
<svg class="r" style="left:316px;top:219.2px" width="7" height="4" viewBox="0 0 7 4"><path d="M0.8 0.6L3.3 2.8L5.8 0.6" fill="none" stroke="#555" stroke-width="1"/></svg>
<div class="r" style="left:404.0px;top:215.5px;width:11.5px;height:10.5px;background:#e8e8e8;box-sizing:border-box;border:1px solid #c4c4c4;"></div>
<svg class="r" style="left:406.5px;top:219.2px" width="7" height="4" viewBox="0 0 7 4"><path d="M0.8 0.6L3.3 2.8L5.8 0.6" fill="none" stroke="#555" stroke-width="1"/></svg>
<div class="r" style="left:476.0px;top:215.5px;width:11.5px;height:10.5px;background:#e8e8e8;box-sizing:border-box;border:1px solid #c4c4c4;"></div>
<svg class="r" style="left:478.5px;top:219.2px" width="7" height="4" viewBox="0 0 7 4"><path d="M0.8 0.6L3.3 2.8L5.8 0.6" fill="none" stroke="#555" stroke-width="1"/></svg>
<div class="t" style="top:215.50px;font-size:9.00px;line-height:11px;color:#333;left:184px;transform-origin:0 50%;transform:scaleX(0.858);">07:00</div>
<div class="t" style="top:215.50px;font-size:9.00px;line-height:11px;color:#333;left:235.3px;transform-origin:0 50%;transform:scaleX(0.858);">leicht bewölkt</div>
<div class="t" style="top:215.50px;font-size:9.00px;line-height:11px;color:#333;left:329px;transform-origin:0 50%;transform:scaleX(0.858);">trocken</div>
<div class="t" style="top:215.50px;font-size:9.00px;line-height:11px;color:#333;left:418.5px;transform-origin:0 50%;transform:scaleX(0.858);">leichter Wind</div>
<div class="t" style="top:215.50px;font-size:9.00px;line-height:11px;color:#333;left:489.3px;transform-origin:0 50%;transform:scaleX(0.858);">10 °C</div>
<div class="t" style="top:215.50px;font-size:9.00px;line-height:11px;color:#333;left:563.3px;transform-origin:0 50%;transform:scaleX(0.858);">50 %</div>
<div class="t" style="top:215.50px;font-size:9.00px;line-height:11px;color:#333;left:653.8px;transform-origin:0 50%;transform:scaleX(0.858);">2 Bilder</div>
<div class="r" style="left:181.5px;top:239px;width:576px;height:1px;background:#e6e6e6;"></div>
<div class="r" style="left:170.5px;top:229.53px;width:9px;height:9px;background:#fff;box-sizing:border-box;border:1px solid #7a7a7a;"></div>
<div class="r" style="left:221.3px;top:229.03px;width:9px;height:9.5px;background:#efefef;box-sizing:border-box;border:1px solid #e0e0e0;"></div>
<svg class="r" style="left:221.3px;top:229.03px" width="9" height="10" viewBox="0 0 9 10"><path d="M2.8 3.8L4.9 1.6L7 3.8Z M2.8 6.6L4.9 8.8L7 6.6Z" fill="#222"/></svg>
<div class="r" style="left:313.5px;top:228.53px;width:11.5px;height:10.5px;background:#e8e8e8;box-sizing:border-box;border:1px solid #c4c4c4;"></div>
<svg class="r" style="left:316px;top:232.23px" width="7" height="4" viewBox="0 0 7 4"><path d="M0.8 0.6L3.3 2.8L5.8 0.6" fill="none" stroke="#555" stroke-width="1"/></svg>
<div class="r" style="left:404.0px;top:228.53px;width:11.5px;height:10.5px;background:#e8e8e8;box-sizing:border-box;border:1px solid #c4c4c4;"></div>
<svg class="r" style="left:406.5px;top:232.23px" width="7" height="4" viewBox="0 0 7 4"><path d="M0.8 0.6L3.3 2.8L5.8 0.6" fill="none" stroke="#555" stroke-width="1"/></svg>
<div class="r" style="left:476.0px;top:228.53px;width:11.5px;height:10.5px;background:#e8e8e8;box-sizing:border-box;border:1px solid #c4c4c4;"></div>
<svg class="r" style="left:478.5px;top:232.23px" width="7" height="4" viewBox="0 0 7 4"><path d="M0.8 0.6L3.3 2.8L5.8 0.6" fill="none" stroke="#555" stroke-width="1"/></svg>
<div class="t" style="top:228.53px;font-size:9.00px;line-height:11px;color:#333;left:184px;transform-origin:0 50%;transform:scaleX(0.858);">08:00</div>
<div class="t" style="top:228.53px;font-size:9.00px;line-height:11px;color:#333;left:235.3px;transform-origin:0 50%;transform:scaleX(0.858);">klar, wolkenlos</div>
<div class="t" style="top:228.53px;font-size:9.00px;line-height:11px;color:#333;left:329px;transform-origin:0 50%;transform:scaleX(0.858);">trocken</div>
<div class="t" style="top:228.53px;font-size:9.00px;line-height:11px;color:#333;left:418.5px;transform-origin:0 50%;transform:scaleX(0.858);">leichter Zug</div>
<div class="t" style="top:228.53px;font-size:9.00px;line-height:11px;color:#333;left:489.3px;transform-origin:0 50%;transform:scaleX(0.858);">10 °C</div>
<div class="t" style="top:228.53px;font-size:9.00px;line-height:11px;color:#333;left:563.3px;transform-origin:0 50%;transform:scaleX(0.858);">50 %</div>
<div class="t" style="top:228.53px;font-size:9.00px;line-height:11px;color:#333;left:653.8px;transform-origin:0 50%;transform:scaleX(0.858);">Keine Bilder</div>
<div class="r" style="left:181.5px;top:252px;width:576px;height:1px;background:#e6e6e6;"></div>
<div class="r" style="left:170.5px;top:242.56px;width:9px;height:9px;background:#fff;box-sizing:border-box;border:1px solid #7a7a7a;"></div>
<div class="r" style="left:221.3px;top:242.06px;width:9px;height:9.5px;background:#efefef;box-sizing:border-box;border:1px solid #e0e0e0;"></div>
<svg class="r" style="left:221.3px;top:242.06px" width="9" height="10" viewBox="0 0 9 10"><path d="M2.8 3.8L4.9 1.6L7 3.8Z M2.8 6.6L4.9 8.8L7 6.6Z" fill="#222"/></svg>
<div class="r" style="left:313.5px;top:241.56px;width:11.5px;height:10.5px;background:#e8e8e8;box-sizing:border-box;border:1px solid #c4c4c4;"></div>
<svg class="r" style="left:316px;top:245.26px" width="7" height="4" viewBox="0 0 7 4"><path d="M0.8 0.6L3.3 2.8L5.8 0.6" fill="none" stroke="#555" stroke-width="1"/></svg>
<div class="r" style="left:404.0px;top:241.56px;width:11.5px;height:10.5px;background:#e8e8e8;box-sizing:border-box;border:1px solid #c4c4c4;"></div>
<svg class="r" style="left:406.5px;top:245.26px" width="7" height="4" viewBox="0 0 7 4"><path d="M0.8 0.6L3.3 2.8L5.8 0.6" fill="none" stroke="#555" stroke-width="1"/></svg>
<div class="r" style="left:476.0px;top:241.56px;width:11.5px;height:10.5px;background:#e8e8e8;box-sizing:border-box;border:1px solid #c4c4c4;"></div>
<svg class="r" style="left:478.5px;top:245.26px" width="7" height="4" viewBox="0 0 7 4"><path d="M0.8 0.6L3.3 2.8L5.8 0.6" fill="none" stroke="#555" stroke-width="1"/></svg>
<div class="t" style="top:241.56px;font-size:9.00px;line-height:11px;color:#333;left:184px;transform-origin:0 50%;transform:scaleX(0.858);">09:00</div>
<div class="t" style="top:241.56px;font-size:9.00px;line-height:11px;color:#333;left:235.3px;transform-origin:0 50%;transform:scaleX(0.858);">leicht bewölkt</div>
<div class="t" style="top:241.56px;font-size:9.00px;line-height:11px;color:#333;left:329px;transform-origin:0 50%;transform:scaleX(0.858);">trocken</div>
<div class="t" style="top:241.56px;font-size:9.00px;line-height:11px;color:#333;left:418.5px;transform-origin:0 50%;transform:scaleX(0.858);">schwacher Wi...</div>
<div class="t" style="top:241.56px;font-size:9.00px;line-height:11px;color:#333;left:489.3px;transform-origin:0 50%;transform:scaleX(0.858);">11 °C</div>
<div class="t" style="top:241.56px;font-size:9.00px;line-height:11px;color:#333;left:563.3px;transform-origin:0 50%;transform:scaleX(0.858);">52 %</div>
<div class="t" style="top:241.56px;font-size:9.00px;line-height:11px;color:#333;left:653.8px;transform-origin:0 50%;transform:scaleX(0.858);">Keine Bilder</div>
<div class="r" style="left:181.5px;top:265px;width:576px;height:1px;background:#e6e6e6;"></div>
<div class="r" style="left:170.5px;top:255.58999999999997px;width:9px;height:9px;background:#fff;box-sizing:border-box;border:1px solid #c0c0c0;"></div>
<div class="r" style="left:221.3px;top:255.08999999999997px;width:9px;height:9.5px;background:#efefef;box-sizing:border-box;border:1px solid #e0e0e0;"></div>
<svg class="r" style="left:221.3px;top:255.08999999999997px" width="9" height="10" viewBox="0 0 9 10"><path d="M2.8 3.8L4.9 1.6L7 3.8Z M2.8 6.6L4.9 8.8L7 6.6Z" fill="#222"/></svg>
<div class="r" style="left:313.5px;top:254.58999999999997px;width:11.5px;height:10.5px;background:#e8e8e8;box-sizing:border-box;border:1px solid #c4c4c4;"></div>
<svg class="r" style="left:316px;top:258.28999999999996px" width="7" height="4" viewBox="0 0 7 4"><path d="M0.8 0.6L3.3 2.8L5.8 0.6" fill="none" stroke="#555" stroke-width="1"/></svg>
<div class="r" style="left:404.0px;top:254.58999999999997px;width:11.5px;height:10.5px;background:#e8e8e8;box-sizing:border-box;border:1px solid #c4c4c4;"></div>
<svg class="r" style="left:406.5px;top:258.28999999999996px" width="7" height="4" viewBox="0 0 7 4"><path d="M0.8 0.6L3.3 2.8L5.8 0.6" fill="none" stroke="#555" stroke-width="1"/></svg>
<div class="r" style="left:476.0px;top:254.58999999999997px;width:11.5px;height:10.5px;background:#e8e8e8;box-sizing:border-box;border:1px solid #c4c4c4;"></div>
<svg class="r" style="left:478.5px;top:258.28999999999996px" width="7" height="4" viewBox="0 0 7 4"><path d="M0.8 0.6L3.3 2.8L5.8 0.6" fill="none" stroke="#555" stroke-width="1"/></svg>
<div class="t" style="top:254.59px;font-size:9.00px;line-height:11px;color:#333;left:184px;transform-origin:0 50%;transform:scaleX(0.858);">10:00</div>
<div class="t" style="top:254.59px;font-size:9.00px;line-height:11px;color:#333;left:235.3px;transform-origin:0 50%;transform:scaleX(0.858);">meist sonnig</div>
<div class="t" style="top:254.59px;font-size:9.00px;line-height:11px;color:#333;left:329px;transform-origin:0 50%;transform:scaleX(0.858);">trocken</div>
<div class="t" style="top:254.59px;font-size:9.00px;line-height:11px;color:#333;left:418.5px;transform-origin:0 50%;transform:scaleX(0.858);">mäßiger Wind</div>
<div class="t" style="top:254.59px;font-size:9.00px;line-height:11px;color:#333;left:489.3px;transform-origin:0 50%;transform:scaleX(0.858);">12 °C</div>
<div class="t" style="top:254.59px;font-size:9.00px;line-height:11px;color:#333;left:563.3px;transform-origin:0 50%;transform:scaleX(0.858);">52 %</div>
<div class="t" style="top:254.59px;font-size:9.00px;line-height:11px;color:#333;left:653.8px;transform-origin:0 50%;transform:scaleX(0.858);">Keine Bilder</div>
<div class="r" style="left:181.5px;top:278px;width:576px;height:1px;background:#e6e6e6;"></div>
<div class="r" style="left:170.5px;top:268.62px;width:9px;height:9px;background:#fff;box-sizing:border-box;border:1px solid #7a7a7a;"></div>
<div class="r" style="left:221.3px;top:268.12px;width:9px;height:9.5px;background:#efefef;box-sizing:border-box;border:1px solid #e0e0e0;"></div>
<svg class="r" style="left:221.3px;top:268.12px" width="9" height="10" viewBox="0 0 9 10"><path d="M2.8 3.8L4.9 1.6L7 3.8Z M2.8 6.6L4.9 8.8L7 6.6Z" fill="#222"/></svg>
<div class="r" style="left:313.5px;top:267.62px;width:11.5px;height:10.5px;background:#e8e8e8;box-sizing:border-box;border:1px solid #c4c4c4;"></div>
<svg class="r" style="left:316px;top:271.32px" width="7" height="4" viewBox="0 0 7 4"><path d="M0.8 0.6L3.3 2.8L5.8 0.6" fill="none" stroke="#555" stroke-width="1"/></svg>
<div class="r" style="left:404.0px;top:267.62px;width:11.5px;height:10.5px;background:#e8e8e8;box-sizing:border-box;border:1px solid #c4c4c4;"></div>
<svg class="r" style="left:406.5px;top:271.32px" width="7" height="4" viewBox="0 0 7 4"><path d="M0.8 0.6L3.3 2.8L5.8 0.6" fill="none" stroke="#555" stroke-width="1"/></svg>
<div class="r" style="left:476.0px;top:267.62px;width:11.5px;height:10.5px;background:#e8e8e8;box-sizing:border-box;border:1px solid #c4c4c4;"></div>
<svg class="r" style="left:478.5px;top:271.32px" width="7" height="4" viewBox="0 0 7 4"><path d="M0.8 0.6L3.3 2.8L5.8 0.6" fill="none" stroke="#555" stroke-width="1"/></svg>
<div class="t" style="top:267.62px;font-size:9.00px;line-height:11px;color:#333;left:184px;transform-origin:0 50%;transform:scaleX(0.858);">11:00</div>
<div class="t" style="top:267.62px;font-size:9.00px;line-height:11px;color:#333;left:235.3px;transform-origin:0 50%;transform:scaleX(0.858);">meist sonnig</div>
<div class="t" style="top:267.62px;font-size:9.00px;line-height:11px;color:#333;left:329px;transform-origin:0 50%;transform:scaleX(0.858);">trocken</div>
<div class="t" style="top:267.62px;font-size:9.00px;line-height:11px;color:#333;left:418.5px;transform-origin:0 50%;transform:scaleX(0.858);">mäßiger Wind</div>
<div class="t" style="top:267.62px;font-size:9.00px;line-height:11px;color:#333;left:489.3px;transform-origin:0 50%;transform:scaleX(0.858);">13 °C</div>
<div class="t" style="top:267.62px;font-size:9.00px;line-height:11px;color:#333;left:563.3px;transform-origin:0 50%;transform:scaleX(0.858);">54 %</div>
<div class="t" style="top:267.62px;font-size:9.00px;line-height:11px;color:#333;left:653.8px;transform-origin:0 50%;transform:scaleX(0.858);">Keine Bilder</div>
<div class="r" style="left:181.5px;top:291px;width:576px;height:1px;background:#e6e6e6;"></div>
<div class="r" style="left:170.5px;top:281.65px;width:9px;height:9px;background:#fff;box-sizing:border-box;border:1px solid #7a7a7a;"></div>
<div class="r" style="left:221.3px;top:281.15px;width:9px;height:9.5px;background:#efefef;box-sizing:border-box;border:1px solid #e0e0e0;"></div>
<svg class="r" style="left:221.3px;top:281.15px" width="9" height="10" viewBox="0 0 9 10"><path d="M2.8 3.8L4.9 1.6L7 3.8Z M2.8 6.6L4.9 8.8L7 6.6Z" fill="#222"/></svg>
<div class="r" style="left:313.5px;top:280.65px;width:11.5px;height:10.5px;background:#e8e8e8;box-sizing:border-box;border:1px solid #c4c4c4;"></div>
<svg class="r" style="left:316px;top:284.34999999999997px" width="7" height="4" viewBox="0 0 7 4"><path d="M0.8 0.6L3.3 2.8L5.8 0.6" fill="none" stroke="#555" stroke-width="1"/></svg>
<div class="r" style="left:404.0px;top:280.65px;width:11.5px;height:10.5px;background:#e8e8e8;box-sizing:border-box;border:1px solid #c4c4c4;"></div>
<svg class="r" style="left:406.5px;top:284.34999999999997px" width="7" height="4" viewBox="0 0 7 4"><path d="M0.8 0.6L3.3 2.8L5.8 0.6" fill="none" stroke="#555" stroke-width="1"/></svg>
<div class="r" style="left:476.0px;top:280.65px;width:11.5px;height:10.5px;background:#e8e8e8;box-sizing:border-box;border:1px solid #c4c4c4;"></div>
<svg class="r" style="left:478.5px;top:284.34999999999997px" width="7" height="4" viewBox="0 0 7 4"><path d="M0.8 0.6L3.3 2.8L5.8 0.6" fill="none" stroke="#555" stroke-width="1"/></svg>
<div class="t" style="top:280.65px;font-size:9.00px;line-height:11px;color:#333;left:184px;transform-origin:0 50%;transform:scaleX(0.858);">12:00</div>
<div class="t" style="top:280.65px;font-size:9.00px;line-height:11px;color:#333;left:235.3px;transform-origin:0 50%;transform:scaleX(0.858);">meist sonnig</div>
<div class="t" style="top:280.65px;font-size:9.00px;line-height:11px;color:#333;left:329px;transform-origin:0 50%;transform:scaleX(0.858);">trocken</div>
<div class="t" style="top:280.65px;font-size:9.00px;line-height:11px;color:#333;left:418.5px;transform-origin:0 50%;transform:scaleX(0.858);">leichter Wind</div>
<div class="t" style="top:280.65px;font-size:9.00px;line-height:11px;color:#333;left:489.3px;transform-origin:0 50%;transform:scaleX(0.858);">14 °C</div>
<div class="t" style="top:280.65px;font-size:9.00px;line-height:11px;color:#333;left:563.3px;transform-origin:0 50%;transform:scaleX(0.858);">52 %</div>
<div class="t" style="top:280.65px;font-size:9.00px;line-height:11px;color:#333;left:653.8px;transform-origin:0 50%;transform:scaleX(0.858);">Keine Bilder</div>
<div class="r" style="left:181.5px;top:304px;width:576px;height:1px;background:#e6e6e6;"></div>
<div class="r" style="left:170.5px;top:294.68px;width:9px;height:9px;background:#fff;box-sizing:border-box;border:1px solid #c0c0c0;"></div>
<div class="r" style="left:221.3px;top:294.18px;width:9px;height:9.5px;background:#efefef;box-sizing:border-box;border:1px solid #e0e0e0;"></div>
<svg class="r" style="left:221.3px;top:294.18px" width="9" height="10" viewBox="0 0 9 10"><path d="M2.8 3.8L4.9 1.6L7 3.8Z M2.8 6.6L4.9 8.8L7 6.6Z" fill="#222"/></svg>
<div class="r" style="left:313.5px;top:293.68px;width:11.5px;height:10.5px;background:#e8e8e8;box-sizing:border-box;border:1px solid #c4c4c4;"></div>
<svg class="r" style="left:316px;top:297.38px" width="7" height="4" viewBox="0 0 7 4"><path d="M0.8 0.6L3.3 2.8L5.8 0.6" fill="none" stroke="#555" stroke-width="1"/></svg>
<div class="r" style="left:404.0px;top:293.68px;width:11.5px;height:10.5px;background:#e8e8e8;box-sizing:border-box;border:1px solid #c4c4c4;"></div>
<svg class="r" style="left:406.5px;top:297.38px" width="7" height="4" viewBox="0 0 7 4"><path d="M0.8 0.6L3.3 2.8L5.8 0.6" fill="none" stroke="#555" stroke-width="1"/></svg>
<div class="r" style="left:476.0px;top:293.68px;width:11.5px;height:10.5px;background:#e8e8e8;box-sizing:border-box;border:1px solid #c4c4c4;"></div>
<svg class="r" style="left:478.5px;top:297.38px" width="7" height="4" viewBox="0 0 7 4"><path d="M0.8 0.6L3.3 2.8L5.8 0.6" fill="none" stroke="#555" stroke-width="1"/></svg>
<div class="t" style="top:293.68px;font-size:9.00px;line-height:11px;color:#333;left:184px;transform-origin:0 50%;transform:scaleX(0.858);">13:00</div>
<div class="t" style="top:293.68px;font-size:9.00px;line-height:11px;color:#333;left:235.3px;transform-origin:0 50%;transform:scaleX(0.858);">sonnig</div>
<div class="t" style="top:293.68px;font-size:9.00px;line-height:11px;color:#333;left:329px;transform-origin:0 50%;transform:scaleX(0.858);">trocken</div>
<div class="t" style="top:293.68px;font-size:9.00px;line-height:11px;color:#333;left:418.5px;transform-origin:0 50%;transform:scaleX(0.858);">leichter Wind</div>
<div class="t" style="top:293.68px;font-size:9.00px;line-height:11px;color:#333;left:489.3px;transform-origin:0 50%;transform:scaleX(0.858);">15 °C</div>
<div class="t" style="top:293.68px;font-size:9.00px;line-height:11px;color:#333;left:563.3px;transform-origin:0 50%;transform:scaleX(0.858);">50 %</div>
<div class="t" style="top:293.68px;font-size:9.00px;line-height:11px;color:#333;left:653.8px;transform-origin:0 50%;transform:scaleX(0.858);">Keine Bilder</div>
<div class="r" style="left:181.5px;top:317px;width:576px;height:1px;background:#e6e6e6;"></div>
<div class="r" style="left:170.5px;top:307.71px;width:9px;height:9px;background:#fff;box-sizing:border-box;border:1px solid #7a7a7a;"></div>
<div class="r" style="left:221.3px;top:307.21px;width:9px;height:9.5px;background:#efefef;box-sizing:border-box;border:1px solid #e0e0e0;"></div>
<svg class="r" style="left:221.3px;top:307.21px" width="9" height="10" viewBox="0 0 9 10"><path d="M2.8 3.8L4.9 1.6L7 3.8Z M2.8 6.6L4.9 8.8L7 6.6Z" fill="#222"/></svg>
<div class="r" style="left:313.5px;top:306.71px;width:11.5px;height:10.5px;background:#e8e8e8;box-sizing:border-box;border:1px solid #c4c4c4;"></div>
<svg class="r" style="left:316px;top:310.40999999999997px" width="7" height="4" viewBox="0 0 7 4"><path d="M0.8 0.6L3.3 2.8L5.8 0.6" fill="none" stroke="#555" stroke-width="1"/></svg>
<div class="r" style="left:404.0px;top:306.71px;width:11.5px;height:10.5px;background:#e8e8e8;box-sizing:border-box;border:1px solid #c4c4c4;"></div>
<svg class="r" style="left:406.5px;top:310.40999999999997px" width="7" height="4" viewBox="0 0 7 4"><path d="M0.8 0.6L3.3 2.8L5.8 0.6" fill="none" stroke="#555" stroke-width="1"/></svg>
<div class="r" style="left:476.0px;top:306.71px;width:11.5px;height:10.5px;background:#e8e8e8;box-sizing:border-box;border:1px solid #c4c4c4;"></div>
<svg class="r" style="left:478.5px;top:310.40999999999997px" width="7" height="4" viewBox="0 0 7 4"><path d="M0.8 0.6L3.3 2.8L5.8 0.6" fill="none" stroke="#555" stroke-width="1"/></svg>
<div class="t" style="top:306.71px;font-size:9.00px;line-height:11px;color:#333;left:184px;transform-origin:0 50%;transform:scaleX(0.858);">14:00</div>
<div class="t" style="top:306.71px;font-size:9.00px;line-height:11px;color:#333;left:235.3px;transform-origin:0 50%;transform:scaleX(0.858);">sonnig</div>
<div class="t" style="top:306.71px;font-size:9.00px;line-height:11px;color:#333;left:329px;transform-origin:0 50%;transform:scaleX(0.858);">trocken</div>
<div class="t" style="top:306.71px;font-size:9.00px;line-height:11px;color:#333;left:418.5px;transform-origin:0 50%;transform:scaleX(0.858);">leichter Wind</div>
<div class="t" style="top:306.71px;font-size:9.00px;line-height:11px;color:#333;left:489.3px;transform-origin:0 50%;transform:scaleX(0.858);">15 °C</div>
<div class="t" style="top:306.71px;font-size:9.00px;line-height:11px;color:#333;left:563.3px;transform-origin:0 50%;transform:scaleX(0.858);">48 %</div>
<div class="t" style="top:306.71px;font-size:9.00px;line-height:11px;color:#333;left:653.8px;transform-origin:0 50%;transform:scaleX(0.858);">Keine Bilder</div>
<div class="r" style="left:181.5px;top:330px;width:576px;height:1px;background:#e6e6e6;"></div>
<div class="r" style="left:170.5px;top:320.74px;width:9px;height:9px;background:#fff;box-sizing:border-box;border:1px solid #7a7a7a;"></div>
<div class="r" style="left:221.3px;top:320.24px;width:9px;height:9.5px;background:#efefef;box-sizing:border-box;border:1px solid #e0e0e0;"></div>
<svg class="r" style="left:221.3px;top:320.24px" width="9" height="10" viewBox="0 0 9 10"><path d="M2.8 3.8L4.9 1.6L7 3.8Z M2.8 6.6L4.9 8.8L7 6.6Z" fill="#222"/></svg>
<div class="r" style="left:313.5px;top:319.74px;width:11.5px;height:10.5px;background:#e8e8e8;box-sizing:border-box;border:1px solid #c4c4c4;"></div>
<svg class="r" style="left:316px;top:323.44px" width="7" height="4" viewBox="0 0 7 4"><path d="M0.8 0.6L3.3 2.8L5.8 0.6" fill="none" stroke="#555" stroke-width="1"/></svg>
<div class="r" style="left:404.0px;top:319.74px;width:11.5px;height:10.5px;background:#e8e8e8;box-sizing:border-box;border:1px solid #c4c4c4;"></div>
<svg class="r" style="left:406.5px;top:323.44px" width="7" height="4" viewBox="0 0 7 4"><path d="M0.8 0.6L3.3 2.8L5.8 0.6" fill="none" stroke="#555" stroke-width="1"/></svg>
<div class="r" style="left:476.0px;top:319.74px;width:11.5px;height:10.5px;background:#e8e8e8;box-sizing:border-box;border:1px solid #c4c4c4;"></div>
<svg class="r" style="left:478.5px;top:323.44px" width="7" height="4" viewBox="0 0 7 4"><path d="M0.8 0.6L3.3 2.8L5.8 0.6" fill="none" stroke="#555" stroke-width="1"/></svg>
<div class="t" style="top:319.74px;font-size:9.00px;line-height:11px;color:#333;left:184px;transform-origin:0 50%;transform:scaleX(0.858);">15:00</div>
<div class="t" style="top:319.74px;font-size:9.00px;line-height:11px;color:#333;left:235.3px;transform-origin:0 50%;transform:scaleX(0.858);">sonnig</div>
<div class="t" style="top:319.74px;font-size:9.00px;line-height:11px;color:#333;left:329px;transform-origin:0 50%;transform:scaleX(0.858);">trocken</div>
<div class="t" style="top:319.74px;font-size:9.00px;line-height:11px;color:#333;left:418.5px;transform-origin:0 50%;transform:scaleX(0.858);">leichter Wind</div>
<div class="t" style="top:319.74px;font-size:9.00px;line-height:11px;color:#333;left:489.3px;transform-origin:0 50%;transform:scaleX(0.858);">14 °C</div>
<div class="t" style="top:319.74px;font-size:9.00px;line-height:11px;color:#333;left:563.3px;transform-origin:0 50%;transform:scaleX(0.858);">48 %</div>
<div class="t" style="top:319.74px;font-size:9.00px;line-height:11px;color:#333;left:653.8px;transform-origin:0 50%;transform:scaleX(0.858);">Keine Bilder</div>
<div class="r" style="left:181.5px;top:343px;width:576px;height:1px;background:#e6e6e6;"></div>
<div class="r" style="left:170.5px;top:333.77px;width:9px;height:9px;background:#fff;box-sizing:border-box;border:1px solid #c0c0c0;"></div>
<div class="r" style="left:221.3px;top:333.27px;width:9px;height:9.5px;background:#efefef;box-sizing:border-box;border:1px solid #e0e0e0;"></div>
<svg class="r" style="left:221.3px;top:333.27px" width="9" height="10" viewBox="0 0 9 10"><path d="M2.8 3.8L4.9 1.6L7 3.8Z M2.8 6.6L4.9 8.8L7 6.6Z" fill="#222"/></svg>
<div class="r" style="left:313.5px;top:332.77px;width:11.5px;height:10.5px;background:#e8e8e8;box-sizing:border-box;border:1px solid #c4c4c4;"></div>
<svg class="r" style="left:316px;top:336.46999999999997px" width="7" height="4" viewBox="0 0 7 4"><path d="M0.8 0.6L3.3 2.8L5.8 0.6" fill="none" stroke="#555" stroke-width="1"/></svg>
<div class="r" style="left:404.0px;top:332.77px;width:11.5px;height:10.5px;background:#e8e8e8;box-sizing:border-box;border:1px solid #c4c4c4;"></div>
<svg class="r" style="left:406.5px;top:336.46999999999997px" width="7" height="4" viewBox="0 0 7 4"><path d="M0.8 0.6L3.3 2.8L5.8 0.6" fill="none" stroke="#555" stroke-width="1"/></svg>
<div class="r" style="left:476.0px;top:332.77px;width:11.5px;height:10.5px;background:#e8e8e8;box-sizing:border-box;border:1px solid #c4c4c4;"></div>
<svg class="r" style="left:478.5px;top:336.46999999999997px" width="7" height="4" viewBox="0 0 7 4"><path d="M0.8 0.6L3.3 2.8L5.8 0.6" fill="none" stroke="#555" stroke-width="1"/></svg>
<div class="t" style="top:332.77px;font-size:9.00px;line-height:11px;color:#333;left:184px;transform-origin:0 50%;transform:scaleX(0.858);">16:00</div>
<div class="t" style="top:332.77px;font-size:9.00px;line-height:11px;color:#333;left:235.3px;transform-origin:0 50%;transform:scaleX(0.858);">meist sonnig</div>
<div class="t" style="top:332.77px;font-size:9.00px;line-height:11px;color:#333;left:329px;transform-origin:0 50%;transform:scaleX(0.858);">trocken</div>
<div class="t" style="top:332.77px;font-size:9.00px;line-height:11px;color:#333;left:418.5px;transform-origin:0 50%;transform:scaleX(0.858);">schwacher Wi...</div>
<div class="t" style="top:332.77px;font-size:9.00px;line-height:11px;color:#333;left:489.3px;transform-origin:0 50%;transform:scaleX(0.858);">14 °C</div>
<div class="t" style="top:332.77px;font-size:9.00px;line-height:11px;color:#333;left:563.3px;transform-origin:0 50%;transform:scaleX(0.858);">50 %</div>
<div class="t" style="top:332.77px;font-size:9.00px;line-height:11px;color:#333;left:653.8px;transform-origin:0 50%;transform:scaleX(0.858);">Keine Bilder</div>
<div class="r" style="left:181.5px;top:356px;width:576px;height:1px;background:#e6e6e6;"></div>
<div class="r" style="left:170.5px;top:346.79999999999995px;width:9px;height:9px;background:#fff;box-sizing:border-box;border:1px solid #7a7a7a;"></div>
<div class="r" style="left:221.3px;top:346.29999999999995px;width:9px;height:9.5px;background:#efefef;box-sizing:border-box;border:1px solid #e0e0e0;"></div>
<svg class="r" style="left:221.3px;top:346.29999999999995px" width="9" height="10" viewBox="0 0 9 10"><path d="M2.8 3.8L4.9 1.6L7 3.8Z M2.8 6.6L4.9 8.8L7 6.6Z" fill="#222"/></svg>
<div class="r" style="left:313.5px;top:345.79999999999995px;width:11.5px;height:10.5px;background:#e8e8e8;box-sizing:border-box;border:1px solid #c4c4c4;"></div>
<svg class="r" style="left:316px;top:349.49999999999994px" width="7" height="4" viewBox="0 0 7 4"><path d="M0.8 0.6L3.3 2.8L5.8 0.6" fill="none" stroke="#555" stroke-width="1"/></svg>
<div class="r" style="left:404.0px;top:345.79999999999995px;width:11.5px;height:10.5px;background:#e8e8e8;box-sizing:border-box;border:1px solid #c4c4c4;"></div>
<svg class="r" style="left:406.5px;top:349.49999999999994px" width="7" height="4" viewBox="0 0 7 4"><path d="M0.8 0.6L3.3 2.8L5.8 0.6" fill="none" stroke="#555" stroke-width="1"/></svg>
<div class="r" style="left:476.0px;top:345.79999999999995px;width:11.5px;height:10.5px;background:#e8e8e8;box-sizing:border-box;border:1px solid #c4c4c4;"></div>
<svg class="r" style="left:478.5px;top:349.49999999999994px" width="7" height="4" viewBox="0 0 7 4"><path d="M0.8 0.6L3.3 2.8L5.8 0.6" fill="none" stroke="#555" stroke-width="1"/></svg>
<div class="t" style="top:345.80px;font-size:9.00px;line-height:11px;color:#333;left:184px;transform-origin:0 50%;transform:scaleX(0.858);">17:00</div>
<div class="t" style="top:345.80px;font-size:9.00px;line-height:11px;color:#333;left:235.3px;transform-origin:0 50%;transform:scaleX(0.858);">leicht bewölkt</div>
<div class="t" style="top:345.80px;font-size:9.00px;line-height:11px;color:#333;left:329px;transform-origin:0 50%;transform:scaleX(0.858);">trocken</div>
<div class="t" style="top:345.80px;font-size:9.00px;line-height:11px;color:#333;left:418.5px;transform-origin:0 50%;transform:scaleX(0.858);">leichter Zug</div>
<div class="t" style="top:345.80px;font-size:9.00px;line-height:11px;color:#333;left:489.3px;transform-origin:0 50%;transform:scaleX(0.858);">13 °C</div>
<div class="t" style="top:345.80px;font-size:9.00px;line-height:11px;color:#333;left:563.3px;transform-origin:0 50%;transform:scaleX(0.858);">52 %</div>
<div class="t" style="top:345.80px;font-size:9.00px;line-height:11px;color:#333;left:653.8px;transform-origin:0 50%;transform:scaleX(0.858);">Keine Bilder</div>
<div class="r" style="left:181.5px;top:369px;width:576px;height:1px;background:#e6e6e6;"></div>
<div class="r" style="left:170.5px;top:359.83px;width:9px;height:9px;background:#fff;box-sizing:border-box;border:1px solid #7a7a7a;"></div>
<div class="r" style="left:221.3px;top:359.33px;width:9px;height:9.5px;background:#efefef;box-sizing:border-box;border:1px solid #e0e0e0;"></div>
<svg class="r" style="left:221.3px;top:359.33px" width="9" height="10" viewBox="0 0 9 10"><path d="M2.8 3.8L4.9 1.6L7 3.8Z M2.8 6.6L4.9 8.8L7 6.6Z" fill="#222"/></svg>
<div class="r" style="left:313.5px;top:358.83px;width:11.5px;height:10.5px;background:#e8e8e8;box-sizing:border-box;border:1px solid #c4c4c4;"></div>
<svg class="r" style="left:316px;top:362.53px" width="7" height="4" viewBox="0 0 7 4"><path d="M0.8 0.6L3.3 2.8L5.8 0.6" fill="none" stroke="#555" stroke-width="1"/></svg>
<div class="r" style="left:404.0px;top:358.83px;width:11.5px;height:10.5px;background:#e8e8e8;box-sizing:border-box;border:1px solid #c4c4c4;"></div>
<svg class="r" style="left:406.5px;top:362.53px" width="7" height="4" viewBox="0 0 7 4"><path d="M0.8 0.6L3.3 2.8L5.8 0.6" fill="none" stroke="#555" stroke-width="1"/></svg>
<div class="r" style="left:476.0px;top:358.83px;width:11.5px;height:10.5px;background:#e8e8e8;box-sizing:border-box;border:1px solid #c4c4c4;"></div>
<svg class="r" style="left:478.5px;top:362.53px" width="7" height="4" viewBox="0 0 7 4"><path d="M0.8 0.6L3.3 2.8L5.8 0.6" fill="none" stroke="#555" stroke-width="1"/></svg>
<div class="t" style="top:358.83px;font-size:9.00px;line-height:11px;color:#333;left:184px;transform-origin:0 50%;transform:scaleX(0.858);">18:00</div>
<div class="t" style="top:358.83px;font-size:9.00px;line-height:11px;color:#333;left:235.3px;transform-origin:0 50%;transform:scaleX(0.858);">leicht bewölkt</div>
<div class="t" style="top:358.83px;font-size:9.00px;line-height:11px;color:#333;left:329px;transform-origin:0 50%;transform:scaleX(0.858);">trocken</div>
<div class="t" style="top:358.83px;font-size:9.00px;line-height:11px;color:#333;left:418.5px;transform-origin:0 50%;transform:scaleX(0.858);">leichter Zug</div>
<div class="t" style="top:358.83px;font-size:9.00px;line-height:11px;color:#333;left:489.3px;transform-origin:0 50%;transform:scaleX(0.858);">12 °C</div>
<div class="t" style="top:358.83px;font-size:9.00px;line-height:11px;color:#333;left:563.3px;transform-origin:0 50%;transform:scaleX(0.858);">52 %</div>
<div class="t" style="top:358.83px;font-size:9.00px;line-height:11px;color:#333;left:653.8px;transform-origin:0 50%;transform:scaleX(0.858);">Keine Bilder</div>
<div class="r" style="left:181.5px;top:382px;width:576px;height:1px;background:#e6e6e6;"></div>
<div class="r" style="left:170.5px;top:372.86px;width:9px;height:9px;background:#fff;box-sizing:border-box;border:1px solid #c0c0c0;"></div>
<div class="r" style="left:221.3px;top:372.36px;width:9px;height:9.5px;background:#efefef;box-sizing:border-box;border:1px solid #e0e0e0;"></div>
<svg class="r" style="left:221.3px;top:372.36px" width="9" height="10" viewBox="0 0 9 10"><path d="M2.8 3.8L4.9 1.6L7 3.8Z M2.8 6.6L4.9 8.8L7 6.6Z" fill="#222"/></svg>
<div class="r" style="left:313.5px;top:371.86px;width:11.5px;height:10.5px;background:#e8e8e8;box-sizing:border-box;border:1px solid #c4c4c4;"></div>
<svg class="r" style="left:316px;top:375.56px" width="7" height="4" viewBox="0 0 7 4"><path d="M0.8 0.6L3.3 2.8L5.8 0.6" fill="none" stroke="#555" stroke-width="1"/></svg>
<div class="r" style="left:404.0px;top:371.86px;width:11.5px;height:10.5px;background:#e8e8e8;box-sizing:border-box;border:1px solid #c4c4c4;"></div>
<svg class="r" style="left:406.5px;top:375.56px" width="7" height="4" viewBox="0 0 7 4"><path d="M0.8 0.6L3.3 2.8L5.8 0.6" fill="none" stroke="#555" stroke-width="1"/></svg>
<div class="r" style="left:476.0px;top:371.86px;width:11.5px;height:10.5px;background:#e8e8e8;box-sizing:border-box;border:1px solid #c4c4c4;"></div>
<svg class="r" style="left:478.5px;top:375.56px" width="7" height="4" viewBox="0 0 7 4"><path d="M0.8 0.6L3.3 2.8L5.8 0.6" fill="none" stroke="#555" stroke-width="1"/></svg>
<div class="t" style="top:371.86px;font-size:9.00px;line-height:11px;color:#333;left:184px;transform-origin:0 50%;transform:scaleX(0.858);">19:00</div>
<div class="t" style="top:371.86px;font-size:9.00px;line-height:11px;color:#333;left:235.3px;transform-origin:0 50%;transform:scaleX(0.858);">leicht bewölkt</div>
<div class="t" style="top:371.86px;font-size:9.00px;line-height:11px;color:#333;left:329px;transform-origin:0 50%;transform:scaleX(0.858);">trocken</div>
<div class="t" style="top:371.86px;font-size:9.00px;line-height:11px;color:#333;left:418.5px;transform-origin:0 50%;transform:scaleX(0.858);">leichter Zug</div>
<div class="t" style="top:371.86px;font-size:9.00px;line-height:11px;color:#333;left:489.3px;transform-origin:0 50%;transform:scaleX(0.858);">11 °C</div>
<div class="t" style="top:371.86px;font-size:9.00px;line-height:11px;color:#333;left:563.3px;transform-origin:0 50%;transform:scaleX(0.858);">54 %</div>
<div class="t" style="top:371.86px;font-size:9.00px;line-height:11px;color:#333;left:653.8px;transform-origin:0 50%;transform:scaleX(0.858);">Keine Bilder</div>
<div class="r" style="left:181px;top:213px;width:1px;height:177px;background:#f0f0f0;"></div>
<div class="r" style="left:163px;top:508.5px;width:594px;height:11.5px;background:#e9e9e9;"></div>
<div class="r" style="left:163px;top:508.5px;width:11px;height:11.5px;background:#d9d9d9;box-sizing:border-box;border:1px solid #cfcfcf;"></div>
<div class="r" style="left:174.5px;top:508.5px;width:11px;height:11.5px;background:#d9d9d9;box-sizing:border-box;border:1px solid #cfcfcf;"></div>
<div class="r" style="left:186.5px;top:508.5px;width:11px;height:11.5px;background:#f4f4f4;box-sizing:border-box;border:1px solid #cfcfcf;"></div>
<div class="r" style="left:198.5px;top:508.5px;width:11px;height:11.5px;background:#f4f4f4;box-sizing:border-box;border:1px solid #cfcfcf;"></div>
<div class="r" style="left:210.5px;top:508.5px;width:10px;height:11.5px;background:#f4f4f4;box-sizing:border-box;border:1px solid #cfcfcf;"></div>
<div class="r" style="left:221.5px;top:508.5px;width:10.5px;height:11.5px;background:#f4f4f4;box-sizing:border-box;border:1px solid #cfcfcf;"></div>
<svg class="r" style="left:163px;top:508.5px" width="11" height="11.5" viewBox="0 0 11 11.5"><path d="M3 3.8V7.8" stroke="#9a9a9a" stroke-width="0.8"/><path d="M5.8 3.8L3.6 5.8L5.8 7.8ZM8.4 3.8L6.2 5.8L8.4 7.8Z" fill="#9a9a9a"/></svg>
<svg class="r" style="left:174.5px;top:508.5px" width="11" height="11.5" viewBox="0 0 11 11.5"><path d="M6.6 4L4.4 5.8L6.6 7.6Z" fill="#9a9a9a"/></svg>
<svg class="r" style="left:186.5px;top:508.5px" width="11" height="11.5" viewBox="0 0 11 11.5"><path d="M4.6 3.6L7.2 5.8L4.6 8Z" fill="#222"/></svg>
<svg class="r" style="left:198.5px;top:508.5px" width="11" height="11.5" viewBox="0 0 11 11.5"><path d="M2.4 3.8L4.6 5.8L2.4 7.8ZM5 3.8L7.2 5.8L5 7.8Z" fill="#222"/><path d="M8 3.8V7.8" stroke="#222" stroke-width="0.9"/></svg>
<svg class="r" style="left:210.5px;top:508.5px" width="10" height="11.5" viewBox="0 0 10 11.5"><path d="M5 2.6V9M1.8 5.8H8.2" stroke="#2f8a35" stroke-width="1.8"/></svg>
<svg class="r" style="left:221.5px;top:508.5px" width="10.5" height="11.5" viewBox="0 0 10.5 11.5"><path d="M2 5.8H8.6" stroke="#d34a4a" stroke-width="1.6"/></svg>
<div class="r" style="left:233px;top:508.5px;width:44px;height:11.5px;background:#f4f4f4;"></div>
<svg class="r" style="left:268px;top:510.5px" width="6" height="7" viewBox="0 0 6 7"><path d="M4.5 0.8L1.5 3.5L4.5 6.2" fill="none" stroke="#222" stroke-width="1.2"/></svg>
<div class="r" style="left:277px;top:508.5px;width:415px;height:11.5px;background:#cdcdcd;"></div>
<svg class="r" style="left:749px;top:510.5px" width="6" height="7" viewBox="0 0 6 7"><path d="M1.5 0.8L4.5 3.5L1.5 6.2" fill="none" stroke="#222" stroke-width="1.2"/></svg>
<div class="r" style="left:766.5px;top:121px;width:233.5px;height:15.8px;background:#024286;box-sizing:border-box;border:1px solid #0b3872;"></div>
<div class="t" style="top:122.80px;font-size:9.71px;line-height:12px;color:#e8f0ff;font-weight:bold;left:883px;transform-origin:50% 50%;transform:translateX(-50%) scaleX(0.858);">Details bearbeiten</div>
<div class="r" style="left:767px;top:137px;width:233px;height:384px;background:#fff;"></div>
<div class="r" style="left:861.5px;top:141px;width:1px;height:112px;background:#e2e2e2;"></div>
<div class="r" style="left:995px;top:148px;width:1px;height:105px;background:#e6e6e6;"></div>
<div class="t" style="top:143.30px;font-size:9.00px;line-height:11px;color:#333;left:772.5px;transform-origin:0 50%;transform:scaleX(0.858);">Spalte</div>
<div class="t" style="top:143.30px;font-size:9.00px;line-height:11px;color:#333;left:864.5px;transform-origin:0 50%;transform:scaleX(0.858);">Wert</div>
<div class="r" style="left:771px;top:166px;width:224px;height:1px;background:#e6e6e6;"></div>
<div class="t" style="top:155.62px;font-size:9.00px;line-height:11px;color:#333;left:772.5px;transform-origin:0 50%;transform:scaleX(0.858);">Uhrzeit</div>
<div class="t" style="top:155.62px;font-size:9.00px;line-height:11px;color:#333;left:864.5px;transform-origin:0 50%;transform:scaleX(0.858);">07:00:00</div>
<div class="r" style="left:771px;top:178px;width:224px;height:1px;background:#e6e6e6;"></div>
<div class="t" style="top:167.94px;font-size:9.00px;line-height:11px;color:#333;left:772.5px;transform-origin:0 50%;transform:scaleX(0.858);">Bewölkung</div>
<div class="t" style="top:167.94px;font-size:9.00px;line-height:11px;color:#333;left:864.5px;transform-origin:0 50%;transform:scaleX(0.858);">leicht bewölkt</div>
<div class="r" style="left:771px;top:191px;width:224px;height:1px;background:#e6e6e6;"></div>
<div class="t" style="top:180.26px;font-size:9.00px;line-height:11px;color:#333;left:772.5px;transform-origin:0 50%;transform:scaleX(0.858);">Niederschlag</div>
<div class="t" style="top:180.26px;font-size:9.00px;line-height:11px;color:#333;left:864.5px;transform-origin:0 50%;transform:scaleX(0.858);">trocken</div>
<div class="r" style="left:771px;top:203px;width:224px;height:1px;background:#e6e6e6;"></div>
<div class="t" style="top:192.58px;font-size:9.00px;line-height:11px;color:#333;left:772.5px;transform-origin:0 50%;transform:scaleX(0.858);">Wind</div>
<div class="t" style="top:192.58px;font-size:9.00px;line-height:11px;color:#333;left:864.5px;transform-origin:0 50%;transform:scaleX(0.858);">leichter Wind</div>
<div class="r" style="left:771px;top:215px;width:224px;height:1px;background:#e6e6e6;"></div>
<div class="t" style="top:204.90px;font-size:9.00px;line-height:11px;color:#333;left:772.5px;transform-origin:0 50%;transform:scaleX(0.858);">Temperatur</div>
<div class="t" style="top:204.90px;font-size:9.00px;line-height:11px;color:#333;left:864.5px;transform-origin:0 50%;transform:scaleX(0.858);">10 °C</div>
<div class="r" style="left:771px;top:228px;width:224px;height:1px;background:#e6e6e6;"></div>
<div class="t" style="top:217.22px;font-size:9.00px;line-height:11px;color:#333;left:772.5px;transform-origin:0 50%;transform:scaleX(0.858);">Luftfeuchtigkeit</div>
<div class="t" style="top:217.22px;font-size:9.00px;line-height:11px;color:#333;left:864.5px;transform-origin:0 50%;transform:scaleX(0.858);">50 %</div>
<div class="r" style="left:771px;top:240px;width:224px;height:1px;background:#e6e6e6;"></div>
<div class="t" style="top:229.54px;font-size:9.00px;line-height:11px;color:#333;left:772.5px;transform-origin:0 50%;transform:scaleX(0.858);">Bilder</div>
<div class="t" style="top:229.54px;font-size:9.00px;line-height:11px;color:#333;left:864.5px;transform-origin:0 50%;transform:scaleX(0.858);">2 Bilder</div>
<div class="r" style="left:771px;top:252px;width:224px;height:1px;background:#e6e6e6;"></div>
<div class="t" style="top:241.86px;font-size:9.00px;line-height:11px;color:#333;left:772.5px;transform-origin:0 50%;transform:scaleX(0.858);">Wetterdaten</div>
<div class="r" style="left:851px;top:263px;width:64px;height:3px;background:repeating-conic-gradient(#c8c8c8 0 25%, #fff 0 50%) 0 0/3px 3px;"></div>
<div class="r" style="left:769px;top:268.5px;width:31px;height:15px;background:#fcfcfc;border-top:1px solid #e4e4e4;border-left:1px solid #e4e4e4;box-sizing:border-box;"></div>
<div class="r" style="left:800px;top:269.5px;width:50.5px;height:14px;background:#ececec;"></div>
<div class="t" style="top:270.90px;font-size:9.00px;line-height:11px;color:#333;left:775px;transform-origin:0 50%;transform:scaleX(0.858);">Bilder</div>
<div class="t" style="top:270.90px;font-size:9.00px;line-height:11px;color:#333;left:804px;transform-origin:0 50%;transform:scaleX(0.858);">Temperatur</div>
<div class="r" style="left:769.5px;top:283.5px;width:228px;height:14px;background:#fcfcfc;"></div>
<svg class="r" style="left:771px;top:284px" width="11" height="11" viewBox="0 0 11 11"><rect x="0.6" y="1" width="10" height="8.5" fill="#dfe9e4" stroke="#4f7a6a" stroke-width="1"/><path d="M1.5 8.5L4.5 5L6.5 7L8.5 5.5L10 8.5Z" fill="#3b8a5a"/><rect x="1" y="9.6" width="9.6" height="1.2" fill="#6a8a7a"/></svg>
<svg class="r" style="left:789px;top:284px" width="11" height="11" viewBox="0 0 11 11"><path d="M2 2.5L8 9M8.5 2.5L5.5 6" stroke="#d87070" stroke-width="0.9" fill="none"/></svg>
<svg class="r" style="left:805px;top:284px" width="11" height="11" viewBox="0 0 11 11"><path d="M2 3.5L7 8.5M7 3.5L2 8.5" stroke="#d03a3a" stroke-width="1.3"/></svg>
<svg class="r" style="left:818px;top:284px" width="11" height="11" viewBox="0 0 11 11"><rect x="0.6" y="1.5" width="10" height="8" fill="#f4f8fb" stroke="#5c7a94" stroke-width="0.9"/><path d="M0.6 3.5H10.6M3 3.5V9.5" stroke="#5c7a94" stroke-width="0.8"/></svg>
<svg class="r" style="left:833px;top:284px" width="11" height="11" viewBox="0 0 11 11"><rect x="0.6" y="1" width="10" height="8.5" fill="#d8f0d2" stroke="#52a052" stroke-width="1"/><path d="M1.5 8.5L4.5 5L6.5 7L8.5 5.5L10 8.5Z" fill="#3a9a3a"/></svg>
<svg class="r" style="left:849.5px;top:284px" width="11" height="11" viewBox="0 0 11 11"><path d="M5 0.5V3" stroke="#4a6a8a" stroke-width="0.9"/><ellipse cx="5" cy="6" rx="4" ry="2.8" fill="#eef4fa" stroke="#3d6a96" stroke-width="1"/><path d="M2.5 9L5 10.5L7.5 9" stroke="#3d6a96" stroke-width="0.9" fill="none"/><path d="M1 6H9" stroke="#3d6a96" stroke-width="0.8"/></svg>
<svg class="r" style="left:866px;top:284px" width="11" height="11" viewBox="0 0 11 11"><path d="M4.5 1L8.5 5.2H6V10H3V5.2H0.5Z" fill="#2c5a8c"/></svg>
<svg class="r" style="left:881.5px;top:284px" width="11" height="11" viewBox="0 0 11 11"><path d="M4.5 10L8.5 5.8H6V1H3V5.8H0.5Z" fill="#2c5a8c"/></svg>
<svg class="r" style="left:897px;top:284px" width="11" height="11" viewBox="0 0 11 11"><path d="M8.2 6A3.6 3.6 0 1 1 4.6 2.4" fill="none" stroke="#3d6a96" stroke-width="1.1"/><path d="M4 0.6L6.2 2.4L4 4.2Z" fill="#3d6a96"/><circle cx="6" cy="6" r="1.4" fill="none" stroke="#3d6a96" stroke-width="0.8"/></svg>
<svg class="r" style="left:912.5px;top:284px" width="11" height="11" viewBox="0 0 11 11"><rect x="0.8" y="0.8" width="5.8" height="6.5" fill="#f4f8fb" stroke="#8ea6ba" stroke-width="0.8"/><rect x="3.6" y="3.4" width="5.8" height="7" fill="#e8f0f6" stroke="#6d8aa4" stroke-width="0.8"/></svg>
<svg class="r" style="left:928.5px;top:284px" width="11" height="11" viewBox="0 0 11 11"><rect x="1.6" y="0.6" width="6.4" height="10" rx="0.8" fill="#fafcfe" stroke="#5f7890" stroke-width="0.9"/><path d="M4 2H5.6" stroke="#5f7890" stroke-width="0.8"/></svg>
<svg class="r" style="left:944px;top:284px" width="11" height="11" viewBox="0 0 11 11"><rect x="0.6" y="1.4" width="9" height="8.6" fill="#eef3f8" stroke="#45637f" stroke-width="0.9"/><path d="M0.6 3.4H9.6" stroke="#45637f" stroke-width="1.2"/><circle cx="5.8" cy="6.6" r="1.8" fill="none" stroke="#2d4f78" stroke-width="0.9"/><path d="M7.2 8L9.4 10.2" stroke="#2d4f78" stroke-width="0.9"/></svg>
<div class="r" style="left:769px;top:297px;width:228px;height:121px;background:#f9f9f9;box-sizing:border-box;border:1px solid #b5b5b5;"></div>
<div class="r" style="left:770px;top:298px;width:156px;height:119px;background:#fff;"></div>
<div class="r" style="left:986px;top:298px;width:10px;height:119px;background:#f0f0f0;"></div>
<div class="r" style="left:986.5px;top:308px;width:9px;height:50px;background:#cdcdcd;"></div>
<svg class="r" style="left:987px;top:300px" width="8" height="6" viewBox="0 0 8 6"><path d="M1.5 4.5L4 2L6.5 4.5" fill="none" stroke="#333" stroke-width="1"/></svg>
<svg class="r" style="left:987px;top:408px" width="8" height="6" viewBox="0 0 8 6"><path d="M1.5 1.5L4 4L6.5 1.5" fill="none" stroke="#333" stroke-width="1"/></svg>
<div class="t" style="top:305.50px;font-size:9.00px;line-height:11px;color:#222;left:777px;transform-origin:0 50%;transform:scaleX(0.858);">Name:</div>
<div class="t" style="top:305.50px;font-size:9.00px;line-height:11px;color:#222;left:804.5px;transform-origin:0 50%;transform:scaleX(0.858);">Bild 3: Krane im Einsatz</div>
<div class="t" style="top:351.50px;font-size:9.00px;line-height:11px;color:#222;left:777px;transform-origin:0 50%;transform:scaleX(0.858);">Foto:</div>
<div class="t" style="top:398.10px;font-size:9.00px;line-height:11px;color:#222;left:777px;transform-origin:0 50%;transform:scaleX(0.858);">Info:</div>
<div class="t" style="top:398.10px;font-size:9.00px;line-height:11px;color:#222;left:804.5px;transform-origin:0 50%;transform:scaleX(0.858);">mittlere Bewölkung, Niederschl...</div>
<svg class="r" style="left:804px;top:317px" width="118" height="79" viewBox="0 0 118 79"><defs><linearGradient id="sky" x1="0" y1="0" x2="0.25" y2="1"><stop offset="0" stop-color="#56709c"/><stop offset="0.35" stop-color="#a2adc0"/><stop offset="0.6" stop-color="#b9c0cc"/><stop offset="1" stop-color="#a9b5c8"/></linearGradient><filter id="bl" x="-5%" y="-5%" width="110%" height="110%"><feGaussianBlur stdDeviation="1.6"/></filter><filter id="bl2"><feGaussianBlur stdDeviation="0.35"/></filter></defs><rect width="118" height="79" fill="url(#sky)"/><g filter="url(#bl)"><path d="M0 0H75Q50 6 28 10Q10 13 0 18Z" fill="#38588c" opacity="0.85"/><path d="M0 18Q20 12 40 16Q30 22 0 26Z" fill="#6a84ac" opacity="0.6"/><path d="M70 0H118V8Q95 5 80 9Z" fill="#8896ae" opacity="0.7"/><path d="M0 27Q22 22 46 30Q26 37 0 37Z" fill="#d6dae2" opacity="0.8"/><path d="M60 14Q90 9 118 14V30Q90 26 62 28Z" fill="#ccd1da" opacity="0.75"/><path d="M0 38Q20 34 44 40Q22 47 0 47Z" fill="#dcdfe5" opacity="0.85"/><path d="M60 32Q88 28 118 33V44Q88 40 62 44Z" fill="#c2c8d2" opacity="0.6"/><path d="M0 50Q18 47 40 54L38 70Q18 66 0 70Z" fill="#6684b2" opacity="0.8"/><path d="M56 48Q85 42 118 46V60Q88 56 58 62Z" fill="#d8dce2" opacity="0.85"/><path d="M58 62Q72 58 78 70L58 72Z" fill="#dfe2e6" opacity="0.9"/></g><g filter="url(#bl2)"><path d="M26.2 0L28.6 0L64 37.6L62.4 39.2Z" fill="#3c3030"/><path d="M43 19.5L52 21.5L54.5 28L45 28.5Z" fill="#2a2626"/><rect x="46" y="27" width="5.6" height="52" fill="#7a4a30" opacity="0.55"/><path d="M46.4 27V79M51.2 27V79" stroke="#6a3a22" stroke-width="1.1"/><path d="M46.4 31L51.2 36L46.4 41L51.2 46L46.4 51L51.2 56L46.4 61L51.2 66L46.4 71L51.2 76" fill="none" stroke="#4a2a1a" stroke-width="0.9"/><path d="M62.5 37.6L108.5 42.4L108.5 43.8L62.5 39.2Z" fill="#4a4444"/><rect x="103.8" y="41" width="5.4" height="3.2" fill="#2e2a2a"/><path d="M93.6 36L95.8 35.8L104 70.6L101.8 70.8Z" fill="#3c3636"/><path d="M51.5 64.6L69.8 58.4L70.2 60.2L52 66.2Z" fill="#2e3034"/><rect x="59.4" y="61" width="1.6" height="18" fill="#4a4038"/><rect x="23.8" y="51" width="1.4" height="20" fill="#3c4a5c"/><path d="M14.5 76.5V72Q16 69.6 21 69.6Q27 69.6 28 72V76.5Z" fill="#1e2824"/><path d="M12 79V76H40V79Z" fill="#c8ccd0"/><path d="M40.5 66.6H44.5V79H40.5Z" fill="#8a8c90"/><path d="M52 69.5H60V79H52Z" fill="#b0b2b4"/><path d="M74 79V71.8H107.5V67.4H118V79Z" fill="#22282e"/></g></svg>
<div class="r" style="left:769.5px;top:424.5px;width:225px;height:93px;background:none;box-sizing:border-box;border:1px solid #e2e2e2;"></div>
<div class="r" style="left:773px;top:419px;width:106px;height:10px;background:#fff;"></div>
<div class="t" style="top:418.60px;font-size:9.34px;line-height:12px;color:#333;left:775.5px;transform-origin:0 50%;transform:scaleX(0.858);">Hinweis zum KI - Assistenten</div>
<div class="t" style="top:434.40px;font-size:9.51px;line-height:12px;color:#222;left:775.5px;transform-origin:0 50%;transform:scaleX(0.858);">Es sind noch 50 (Freikontingent) Abfragen verfügbar.</div>
<div class="t" style="top:450.20px;font-size:9.67px;line-height:12px;color:#b93232;left:775.5px;transform-origin:0 50%;transform:scaleX(0.858);">Tragen Sie hier keine personenbezogenen oder</div>
<div class="t" style="top:459.32px;font-size:9.67px;line-height:12px;color:#b93232;left:775.5px;transform-origin:0 50%;transform:scaleX(0.858);">firmeninternen Daten ein. Die Generierung erfolgt im</div>
<div class="t" style="top:468.44px;font-size:9.67px;line-height:12px;color:#b93232;left:775.5px;transform-origin:0 50%;transform:scaleX(0.858);">Hintergrund über einen externen Anbieter (hier klicken für</div>
<div class="t" style="top:477.56px;font-size:9.67px;line-height:12px;color:#b93232;left:775.5px;transform-origin:0 50%;transform:scaleX(0.858);">Details).</div>
<div class="t" style="top:486.68px;font-size:9.67px;line-height:12px;color:#b93232;left:775.5px;transform-origin:0 50%;transform:scaleX(0.858);">Wie bei KI üblich werden Entwürfe vorgeschlagen, die Sie</div>
<div class="t" style="top:495.80px;font-size:9.67px;line-height:12px;color:#b93232;left:775.5px;transform-origin:0 50%;transform:scaleX(0.858);">vor der weiteren Verwendung entsprechend prüfen sollten.</div>
<div class="r" style="left:155px;top:244px;width:3px;height:156px;background:repeating-conic-gradient(#c8c8c8 0 25%, #fff 0 50%) 0 0/3px 3px;"></div>
<div class="r" style="left:762px;top:244px;width:3px;height:157px;background:repeating-conic-gradient(#c8c8c8 0 25%, #fff 0 50%) 0 0/3px 3px;"></div>
<div class="r" style="left:998.5px;top:137px;width:1px;height:385px;background:#e6e6e6;"></div>
<div class="r" style="left:0px;top:523.3px;width:1000px;height:12.7px;background:#024286;"></div>
<div class="r" style="left:0px;top:523.5px;width:1000px;height:1.2px;background:#0b3166;"></div>
<div class="t" style="top:526.00px;font-size:8.16px;line-height:10px;color:#e0e8f8;left:21px;transform-origin:0 50%;transform:scaleX(0.858);">Version: 2025.0.0</div>
<div class="t" style="top:526.00px;font-size:8.16px;line-height:10px;color:#e0e8f8;left:157px;transform-origin:0 50%;transform:scaleX(0.858);">Desktopversion</div>
<div class="t" style="top:526.00px;font-size:8.16px;line-height:10px;color:#e0e8f8;left:284px;transform-origin:0 50%;transform:scaleX(0.858);">Angemeldet als: Administrator</div>
<div class="t" style="top:525.30px;font-size:9.00px;line-height:11px;color:#f0f4ff;font-weight:bold;left:603px;transform-origin:0 50%;transform:scaleX(0.858);">&quot;1&quot; Datum: 13.Feb.2020 Uhrzeit von: 06:43 bis: 17:43</div>
</body></html>
